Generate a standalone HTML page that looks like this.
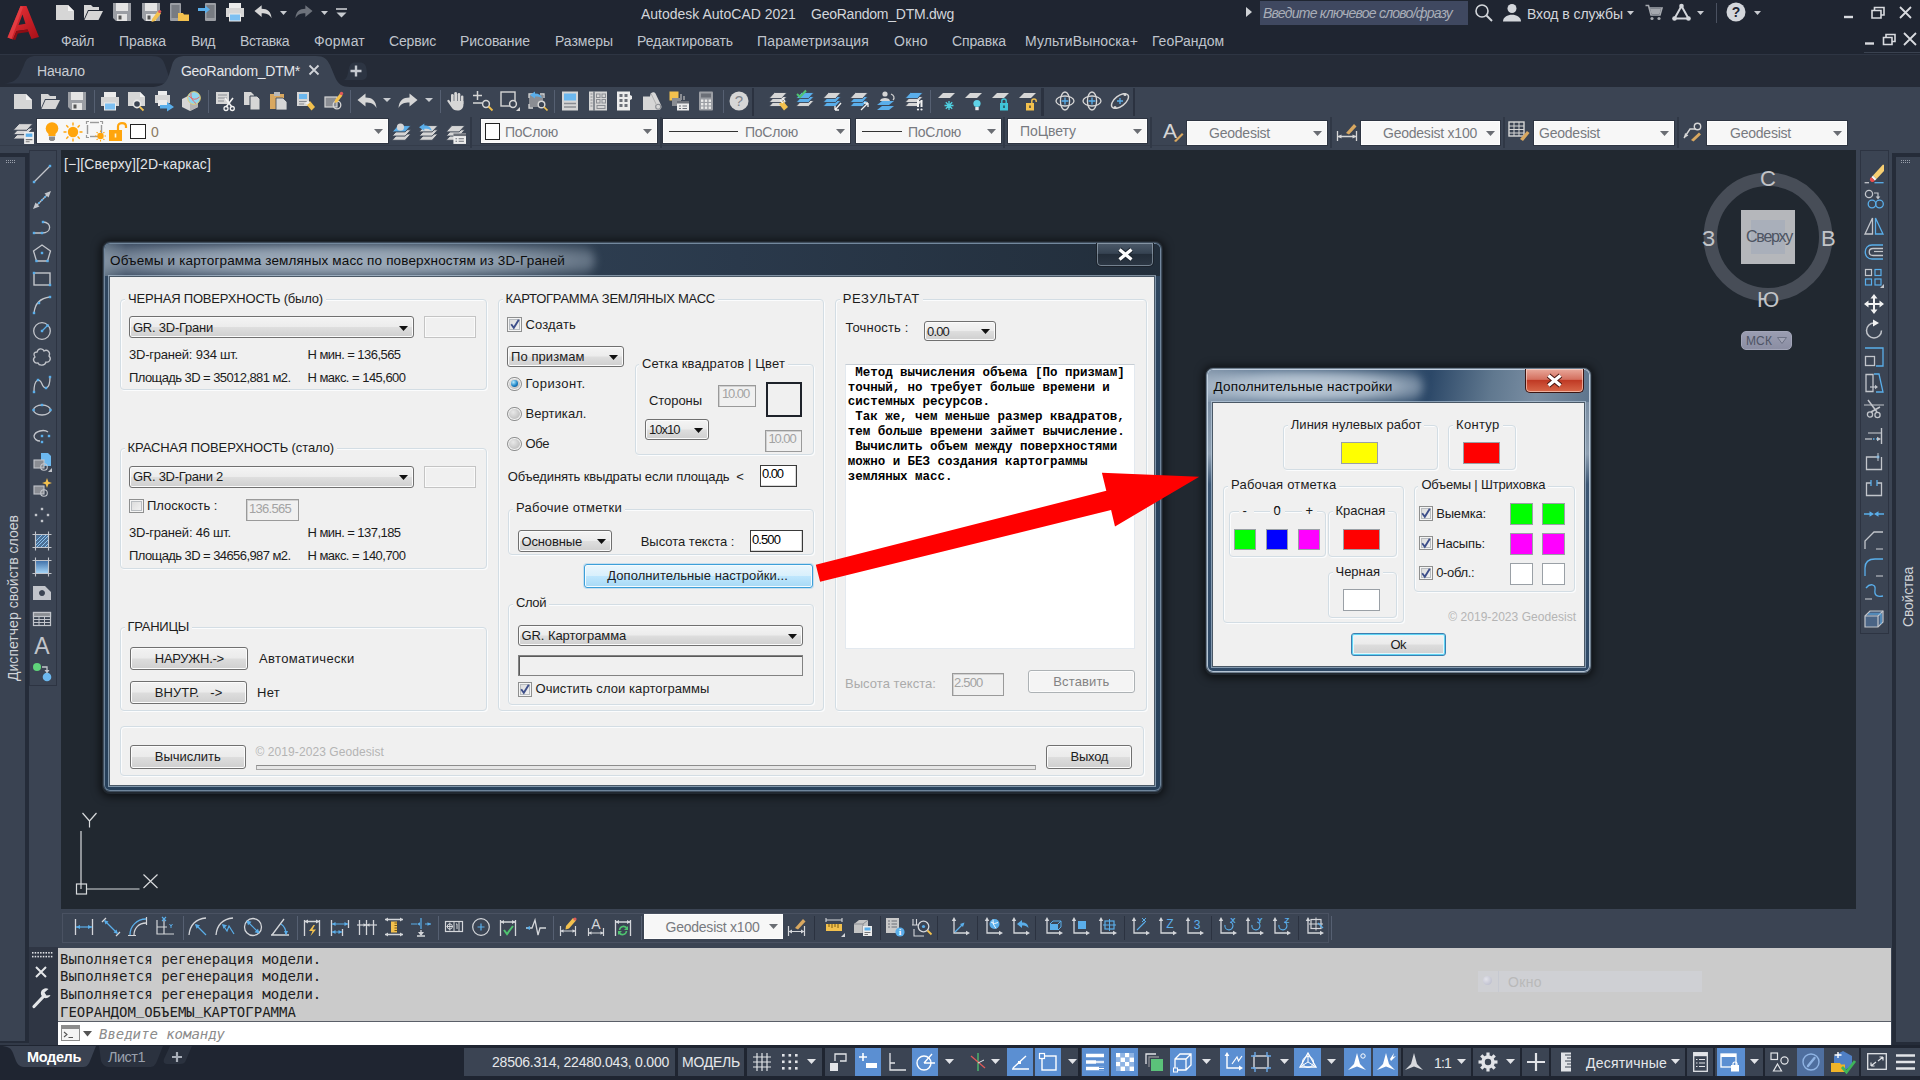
<!DOCTYPE html>
<html lang="ru"><head><meta charset="utf-8"><title>Autodesk AutoCAD 2021 GeoRandom_DTM.dwg</title>
<style>
html,body{margin:0;padding:0;}
body{width:1920px;height:1080px;overflow:hidden;position:relative;background:#212830;font-family:"Liberation Sans",sans-serif;font-size:14px;}
body div,body span.t,body svg{position:absolute;box-sizing:border-box;}
span.t{white-space:pre;display:block;}
svg{overflow:visible;}
</style></head><body>
<div style="left:0px;top:0px;width:1920px;height:1080px;background:#3b4453;"></div>
<div style="left:0px;top:0px;width:1920px;height:54px;background:#1f2531;"></div>
<div style="left:0px;top:54px;width:1920px;height:1px;background:#2e3543;"></div>
<div style="left:0px;top:55px;width:1920px;height:32px;background:#252b37;"></div>
<div style="left:0px;top:87px;width:1920px;height:62px;background:#3b4453;"></div>
<div style="left:0px;top:145px;width:1200px;height:1px;background:#343c4a;"></div>
<div style="left:61px;top:150px;width:1795px;height:759px;background:#212830;"></div>
<div style="left:0px;top:153px;width:29px;height:893px;background:#252c39;"></div>
<div style="left:0px;top:156.5px;width:25px;height:884px;background:#3a4352;"></div>
<div style="left:0px;top:1043.3px;width:29px;height:3px;background:#323a48;"></div>
<div style="left:29px;top:150px;width:28px;height:536px;background:#3b4453;border:1px solid #2d3442;"></div>
<div style="left:57px;top:150px;width:4px;height:760px;background:#3b4453;"></div>
<div style="left:1856px;top:150px;width:4px;height:760px;background:#3b4453;"></div>
<div style="left:1860px;top:150px;width:29px;height:484px;background:#3b4453;border:1px solid #2d3442;"></div>
<div style="left:1892px;top:153px;width:28px;height:893px;background:#252c39;"></div>
<div style="left:1895.5px;top:156.5px;width:25px;height:885px;background:#3a4352;"></div>
<div style="left:57px;top:909px;width:1835px;height:38px;background:#3b4453;"></div>
<div style="left:28.5px;top:947px;width:29px;height:98.5px;background:#2f3644;"></div>
<div style="left:58px;top:947.5px;width:1833px;height:75px;background:#cbcbcb;"></div>
<div style="left:58px;top:1021.3px;width:1833px;height:1px;background:#5a5f68;"></div>
<div style="left:58px;top:1022px;width:1833px;height:23px;background:#ffffff;"></div>
<div style="left:0px;top:1045px;width:1920px;height:35px;background:#1f2531;"></div>
<svg style="left:6px;top:4px;" width="36" height="38" viewBox="0 0 36 38"><defs><linearGradient id="ag" x1="0" y1="0" x2="1" y2="1"><stop offset="0" stop-color="#f0343a"/><stop offset="1" stop-color="#a50f17"/></linearGradient></defs>
<path d="M14.5 2 L20.5 2 L33 33 L25.5 35 L21.5 25.5 L10.5 27 L7 35.5 L1.5 33.5 Z M12.5 21 L19.5 19.8 L16.5 10.5 Z" fill="url(#ag)" fill-rule="evenodd"/>
<path d="M14.5 2 L17 3.2 L5.5 35 L1.5 33.5 Z" fill="#e8444a" opacity=".75"/>
<path d="M7 35.5 L10.5 27 L21.5 25.5 L22.5 28 L11.8 29.6 L9.3 36 Z" fill="#8e0c13"/></svg>
<span class="t" style="left:641px;top:7.15px;font-size:14px;line-height:14px;color:#d3d6db;">Autodesk AutoCAD 2021</span>
<span class="t" style="left:811px;top:7.15px;font-size:14px;line-height:14px;color:#d3d6db;letter-spacing:-0.239px;">GeoRandom_DTM.dwg</span>
<svg style="left:1245px;top:7px;" width="8" height="10" viewBox="0 0 8 10"><path d="M1 0 L7 5 L1 10 Z" fill="#cfd2d6"/></svg>
<div style="left:1260px;top:1px;width:208px;height:24px;background:#3f4860;"></div>
<span class="t" style="left:1263px;top:6.15px;font-size:14px;line-height:14px;color:#a9aeb8;font-family:'Liberation Sans',sans-serif;font-style:italic;letter-spacing:-0.753px;">Введите ключевое слово/фразу</span>
<span class="t" style="left:1527px;top:7.15px;font-size:14px;line-height:14px;color:#d3d6db;letter-spacing:-0.063px;">Вход в службы</span>
<span class="t" style="left:61px;top:34.15px;font-size:14px;line-height:14px;color:#bfc4cc;letter-spacing:-0.355px;">Файл</span>
<span class="t" style="left:119px;top:34.15px;font-size:14px;line-height:14px;color:#bfc4cc;letter-spacing:-0.049px;">Правка</span>
<span class="t" style="left:191px;top:34.15px;font-size:14px;line-height:14px;color:#bfc4cc;letter-spacing:-0.442px;">Вид</span>
<span class="t" style="left:240px;top:34.15px;font-size:14px;line-height:14px;color:#bfc4cc;letter-spacing:-0.434px;">Вставка</span>
<span class="t" style="left:314px;top:34.15px;font-size:14px;line-height:14px;color:#bfc4cc;letter-spacing:0.211px;">Формат</span>
<span class="t" style="left:389px;top:34.15px;font-size:14px;line-height:14px;color:#bfc4cc;letter-spacing:-0.157px;">Сервис</span>
<span class="t" style="left:460px;top:34.15px;font-size:14px;line-height:14px;color:#bfc4cc;letter-spacing:-0.056px;">Рисование</span>
<span class="t" style="left:555px;top:34.15px;font-size:14px;line-height:14px;color:#bfc4cc;letter-spacing:-0.026px;">Размеры</span>
<span class="t" style="left:637px;top:34.15px;font-size:14px;line-height:14px;color:#bfc4cc;letter-spacing:-0.054px;">Редактировать</span>
<span class="t" style="left:757px;top:34.15px;font-size:14px;line-height:14px;color:#bfc4cc;letter-spacing:0.142px;">Параметризация</span>
<span class="t" style="left:894px;top:34.15px;font-size:14px;line-height:14px;color:#bfc4cc;letter-spacing:0.367px;">Окно</span>
<span class="t" style="left:952px;top:34.15px;font-size:14px;line-height:14px;color:#bfc4cc;letter-spacing:-0.131px;">Справка</span>
<span class="t" style="left:1025px;top:34.15px;font-size:14px;line-height:14px;color:#bfc4cc;letter-spacing:0.112px;">МультиВыноска+</span>
<span class="t" style="left:1152px;top:34.15px;font-size:14px;line-height:14px;color:#bfc4cc;letter-spacing:-0.021px;">ГеоРандом</span>
<svg style="left:0px;top:55px;" width="420" height="32" viewBox="0 0 420 32"><path d="M0 28.5 C10 28.5 16 27 20 19 L24 10 C26 3 30 1 36 1 L152 1 C160 1 163 4 165 10 L168 19 C170 26 174 28.5 182 28.5 Z" fill="#2f3746"/>
<path d="M150 32 C160 32 166 30 169 20 L172 10 C174 3 178 1 186 1 L316 1 C324 1 327 4 330 10 L335 22 C338 29 342 32 350 32 Z" fill="#3b4453"/>
<path d="M343 25 C346 25 347 22 348 18 L349 13 C350 9 352 7.5 355 7.5 L360 7.5 C364 7.5 366 10 366.5 14 L367 19 C367 23 365 25 361 25 Z" fill="#2d3543"/></svg>
<span class="t" style="left:37px;top:64.15px;font-size:14px;line-height:14px;color:#c9cdd3;letter-spacing:-0.130px;">Начало</span>
<span class="t" style="left:181px;top:64.15px;font-size:14px;line-height:14px;color:#e4e6ea;letter-spacing:-0.281px;">GeoRandom_DTM*</span>
<svg style="left:308px;top:64px;" width="12" height="12" viewBox="0 0 12 12"><path d="M1.5 1.5 L10.5 10.5 M10.5 1.5 L1.5 10.5" stroke="#d0d3d8" stroke-width="1.8" fill="none"/></svg>
<svg style="left:350px;top:65px;" width="12" height="12" viewBox="0 0 12 12"><path d="M6 0.5 V11.5 M0.5 6 H11.5" stroke="#c4c8cf" stroke-width="2.4" fill="none"/></svg>
<svg style="left:1843px;top:6px;" width="70" height="14" viewBox="0 0 70 14"><path d="M1 11 H10" stroke="#d8dadf" stroke-width="2.4"/>
<path d="M29 4.5 H38 V12 H29 Z M31.5 4.5 V1.5 H41 V9 H38" stroke="#d8dadf" stroke-width="1.6" fill="none"/>
<path d="M57 1 L68 12 M68 1 L57 12" stroke="#d8dadf" stroke-width="1.8"/></svg>
<svg style="left:1864px;top:32px;" width="54" height="14" viewBox="0 0 54 14"><path d="M1 11.5 H10" stroke="#d8dadf" stroke-width="2.4"/>
<path d="M19.5 5.5 H28 V12.5 H19.5 Z M22 5.5 V2.5 H31 V9.5 H28" stroke="#d8dadf" stroke-width="1.6" fill="none"/>
<path d="M40 1 L52 13 M52 1 L40 13" stroke="#d8dadf" stroke-width="1.8"/></svg>
<div style="left:1864px;top:52px;width:56px;height:1px;background:#3a4250;"></div>
<svg style="left:54.5px;top:2px;" width="20" height="20" viewBox="0 0 20 20"><path d="M1 3 H13 L19 9 V18 H1 Z" fill="#d6d6d6"/><path d="M13 3 V9 H19 Z" fill="#f4f4f4"/></svg>
<svg style="left:82.5px;top:2px;" width="20" height="20" viewBox="0 0 20 20"><path d="M1 3 H8 L10 5 H16 V8 H5 L1 17 Z" fill="#d6d6d6"/><path d="M5.5 9 H20 L15.5 18 H1.5 Z" fill="#d6d6d6"/></svg>
<svg style="left:111.5px;top:2px;" width="20" height="20" viewBox="0 0 20 20"><path d="M1 1 H19 V19 H4 L1 16 Z" fill="#9b9ea4"/><rect x="4" y="1" width="12" height="8" fill="#e4e4e4"/><rect x="5" y="12" width="10" height="7" fill="#e4e4e4"/><rect x="6.5" y="13.5" width="3" height="4" fill="#555"/></svg>
<svg style="left:140.5px;top:2px;" width="20" height="20" viewBox="0 0 20 20"><path d="M1 1 H19 V19 H4 L1 16 Z" fill="#9b9ea4"/><rect x="4" y="1" width="12" height="8" fill="#e4e4e4"/><rect x="5" y="12" width="10" height="7" fill="#e4e4e4"/><rect x="6.5" y="13.5" width="3" height="4" fill="#555"/><path d="M11 17 L17 9 L20 11.5 L14 19 L10.5 20 Z" fill="#f3c14e"/><circle cx="18.7" cy="9.5" r="1.6" fill="#e05a5a"/></svg>
<svg style="left:168.5px;top:2px;" width="20" height="20" viewBox="0 0 20 20"><rect x="1" y="1" width="11" height="18" rx="1" fill="#9b9ea4"/><rect x="2.5" y="3" width="8" height="13" fill="#777b82"/><path d="M9 11 H14 L15 12.5 H20 V19 H9 Z" fill="#f3c14e"/></svg>
<svg style="left:197.5px;top:2px;" width="20" height="20" viewBox="0 0 20 20"><rect x="7" y="1" width="11" height="18" rx="1" fill="#9b9ea4"/><rect x="8.5" y="3" width="8" height="13" fill="#777b82"/><path d="M0 6 H7 V3.5 L12 7.5 L7 11.5 V9 H0 Z" fill="#5aaeea"/></svg>
<svg style="left:224.5px;top:2px;" width="20" height="20" viewBox="0 0 20 20"><rect x="4" y="1" width="12" height="6" fill="#ececec"/><path d="M1 6 H19 V15 H1 Z" fill="#d6d6d6"/><rect x="4.5" y="12" width="11" height="7" fill="#7dc0f2" stroke="#ececec" stroke-width="1"/></svg>
<svg style="left:254px;top:3px;" width="18" height="18" viewBox="0 0 20 20"><path d="M0.5 9 L8.5 2.5 V6.5 C15 6.5 19 9.5 19.5 17 C17 12.5 13.5 11.5 8.5 11.5 V15.5 Z" fill="#d6d6d6"/></svg>
<svg style="left:280px;top:11px;" width="7" height="4" viewBox="0 0 7 4"><path d="M0 0 H7 L3.5 4 Z" fill="#c8cbd0"/></svg>
<svg style="left:295px;top:3px;" width="18" height="18" viewBox="0 0 20 20"><path d="M19.5 9 L11.5 2.5 V6.5 C5 6.5 1 9.5 0.5 17 C3 12.5 6.5 11.5 11.5 11.5 V15.5 Z" fill="#6d727b"/></svg>
<svg style="left:321px;top:11px;" width="7" height="4" viewBox="0 0 7 4"><path d="M0 0 H7 L3.5 4 Z" fill="#c8cbd0"/></svg>
<svg style="left:336px;top:8px;" width="11" height="10" viewBox="0 0 11 10"><path d="M0 1 H11" stroke="#c8cbd0" stroke-width="1.6"/><path d="M0.5 4.5 H10.5 L5.5 9.5 Z" fill="#c8cbd0"/></svg>
<svg style="left:1474px;top:3px;" width="20" height="20" viewBox="0 0 20 20"><circle cx="8" cy="8" r="6" fill="none" stroke="#d3d6db" stroke-width="1.6"/><path d="M12.5 12.5 L18 18" stroke="#d3d6db" stroke-width="2"/></svg>
<svg style="left:1502px;top:3px;" width="20" height="20" viewBox="0 0 20 20"><circle cx="10" cy="5.5" r="4.5" fill="#d3d6db"/><path d="M1 18.5 C1 9.5 19 9.5 19 18.5 Z" fill="#d3d6db"/></svg>
<svg style="left:1627px;top:11px;" width="7" height="4" viewBox="0 0 7 4"><path d="M0 0 H7 L3.5 4 Z" fill="#c8cbd0"/></svg>
<svg style="left:1645px;top:4px;" width="18" height="17" viewBox="0 0 18 17"><path d="M0.5 1.5 H3.5 L6 11 H15 L17 4 H4.5" stroke="#a4a8ae" stroke-width="1.6" fill="none"/><path d="M5 5 H16 L14.5 10 H6.5 Z" fill="#a4a8ae"/><circle cx="7" cy="14.5" r="1.6" fill="#a4a8ae"/><circle cx="14" cy="14.5" r="1.6" fill="#a4a8ae"/></svg>
<svg style="left:1672px;top:3px;" width="19" height="18" viewBox="0 0 19 18"><path d="M9.5 3 L16.5 15.5 H2.5 Z" stroke="#d3d6db" stroke-width="2" fill="none"/><circle cx="9.5" cy="3" r="2.3" fill="#d3d6db"/><circle cx="2.5" cy="15.5" r="2.3" fill="#d3d6db"/><circle cx="16.5" cy="15.5" r="2.3" fill="#d3d6db"/></svg>
<svg style="left:1697px;top:11px;" width="7" height="4" viewBox="0 0 7 4"><path d="M0 0 H7 L3.5 4 Z" fill="#c8cbd0"/></svg>
<div style="left:1716px;top:3px;width:1px;height:20px;background:#4a5160;"></div>
<svg style="left:1726px;top:2px;" width="20" height="20" viewBox="0 0 20 20"><circle cx="10" cy="10" r="9.5" fill="#d3d6db"/><text x="10" y="15" text-anchor="middle" font-family="Liberation Sans,sans-serif" font-weight="bold" font-size="14" fill="#1f2531">?</text></svg>
<svg style="left:1754px;top:11px;" width="7" height="4" viewBox="0 0 7 4"><path d="M0 0 H7 L3.5 4 Z" fill="#c8cbd0"/></svg>
<svg style="left:13px;top:91px;" width="20" height="20" viewBox="0 0 20 20"><path d="M1 3 H13 L19 9 V18 H1 Z" fill="#d6d6d6"/><path d="M13 3 V9 H19 Z" fill="#f4f4f4"/></svg>
<svg style="left:40px;top:91px;" width="20" height="20" viewBox="0 0 20 20"><path d="M1 3 H8 L10 5 H16 V8 H5 L1 17 Z" fill="#d6d6d6"/><path d="M5.5 9 H20 L15.5 18 H1.5 Z" fill="#d6d6d6"/></svg>
<svg style="left:67px;top:91px;" width="20" height="20" viewBox="0 0 20 20"><path d="M1 1 H19 V19 H4 L1 16 Z" fill="#9b9ea4"/><rect x="4" y="1" width="12" height="8" fill="#e4e4e4"/><rect x="5" y="12" width="10" height="7" fill="#e4e4e4"/><rect x="6.5" y="13.5" width="3" height="4" fill="#555"/></svg>
<svg style="left:100px;top:91px;" width="20" height="20" viewBox="0 0 20 20"><rect x="4" y="1" width="12" height="6" fill="#ececec"/><path d="M1 6 H19 V15 H1 Z" fill="#d6d6d6"/><rect x="4.5" y="12" width="11" height="7" fill="#7dc0f2" stroke="#ececec" stroke-width="1"/></svg>
<svg style="left:127px;top:91px;" width="20" height="20" viewBox="0 0 20 20"><path d="M1 1 H13 L18 6 V15 H1 Z" fill="#d6d6d6"/><path d="M13 1 V6 H18 Z" fill="#f2f2f2"/><circle cx="10" cy="13" r="3.6" fill="#3b4453" stroke="#e8e8e8" stroke-width="1.6"/><path d="M12.8 15.8 L16.5 19.5" stroke="#f3c14e" stroke-width="1.8"/></svg>
<svg style="left:154px;top:91px;" width="20" height="20" viewBox="0 0 20 20"><rect x="4" y="0" width="9" height="5" fill="#ececec"/><path d="M1 4 H16 V12 H1 Z" fill="#d6d6d6"/><rect x="4" y="9" width="9" height="6" fill="#ececec"/><path d="M6 14 H13 V11 L20 16 L13 20.5 V17.5 H6 Z" fill="#5aaeea"/></svg>
<svg style="left:181px;top:91px;" width="20" height="20" viewBox="0 0 20 20"><path d="M1 8 L9 4 L17 8 V16 L9 20 L1 16 Z" fill="#d6d6d6"/><path d="M9 12 L17 8 V16 L9 20 Z" fill="#b4b4b4"/><circle cx="13" cy="7" r="6.3" fill="#8fd6f0" stroke="#e8d070" stroke-width="1"/><path d="M8 5 Q13 11 18.5 6 M10 2 Q9 8 15 12.5" stroke="#e86a6a" stroke-width="1" fill="none"/></svg>
<svg style="left:215px;top:91px;" width="20" height="20" viewBox="0 0 20 20"><path d="M1 1 H14 V13 H1 Z" fill="#d6d6d6"/><path d="M3 4 H12 M3 7 H12 M3 10 H9" stroke="#8a8d93" stroke-width="1.2"/><path d="M10 7 L17 16 M18 7 L11 16" stroke="#f2f2f2" stroke-width="1.6"/><circle cx="11" cy="17.5" r="2" fill="none" stroke="#f2f2f2" stroke-width="1.3"/><circle cx="17.3" cy="17.5" r="2" fill="none" stroke="#f2f2f2" stroke-width="1.3"/></svg>
<svg style="left:242px;top:91px;" width="20" height="20" viewBox="0 0 20 20"><path d="M2 1 H9 L12 4 V14 H2 Z" fill="#d6d6d6"/><path d="M8 5 H15 L18 8 V19 H8 Z" fill="#d6d6d6" stroke="#3b4453" stroke-width="1"/></svg>
<svg style="left:269px;top:91px;" width="20" height="20" viewBox="0 0 20 20"><path d="M1 3 H15 V18 H1 Z" fill="#d9a860"/><rect x="5" y="1" width="6" height="4" fill="#b9b9b9"/><path d="M7 7 H14 L18 11 V19 H7 Z" fill="#d6d6d6" stroke="#3b4453" stroke-width=".8"/></svg>
<svg style="left:296px;top:91px;" width="20" height="20" viewBox="0 0 20 20"><rect x="1" y="1" width="12" height="14" fill="#d6d6d6"/><rect x="3" y="3" width="8" height="5" fill="#6cb8ef"/><path d="M3 10.5 H11 M3 13 H8" stroke="#8a8d93" stroke-width="1.1"/><path d="M10 13 L14 10 L19 16 L15.5 19.5 Z" fill="#f3c14e"/><path d="M9 12 L12 9.5 L14 11.5 L11 14 Z" fill="#eee"/></svg>
<svg style="left:323px;top:91px;" width="20" height="20" viewBox="0 0 20 20"><rect x="2" y="6" width="12" height="10" fill="#8a8d93" stroke="#d6d6d6" stroke-width="1.2"/><circle cx="14" cy="14" r="3.8" fill="none" stroke="#d6d6d6" stroke-width="1.3"/><path d="M12 9 L17 2.5 L19.5 4.5 L14.5 11 L11.5 12 Z" fill="#f3c14e"/><circle cx="18.5" cy="2.5" r="1.7" fill="#e05a5a"/></svg>
<div style="left:94px;top:90px;width:1px;height:23px;background:#566072;"></div>
<div style="left:208px;top:90px;width:1px;height:23px;background:#566072;"></div>
<div style="left:350px;top:90px;width:1px;height:23px;background:#566072;"></div>
<div style="left:440px;top:90px;width:1px;height:23px;background:#566072;"></div>
<div style="left:554px;top:90px;width:1px;height:23px;background:#566072;"></div>
<div style="left:723px;top:90px;width:1px;height:23px;background:#566072;"></div>
<svg style="left:357px;top:91px;" width="20" height="20" viewBox="0 0 20 20"><path d="M0.5 9 L8.5 2.5 V6.5 C15 6.5 19 9.5 19.5 17 C17 12.5 13.5 11.5 8.5 11.5 V15.5 Z" fill="#d6d6d6"/></svg>
<svg style="left:383px;top:98px;" width="8" height="4" viewBox="0 0 8 4"><path d="M0 0 H8 L4.0 4 Z" fill="#c8cbd0"/></svg>
<svg style="left:398px;top:91px;" width="20" height="20" viewBox="0 0 20 20"><path d="M19.5 9 L11.5 2.5 V6.5 C5 6.5 1 9.5 0.5 17 C3 12.5 6.5 11.5 11.5 11.5 V15.5 Z" fill="#d6d6d6"/></svg>
<svg style="left:425px;top:98px;" width="8" height="4" viewBox="0 0 8 4"><path d="M0 0 H8 L4.0 4 Z" fill="#c8cbd0"/></svg>
<svg style="left:446px;top:91px;" width="20" height="20" viewBox="0 0 20 20"><g fill="#d6d6d6"><rect x="5" y="3" width="2.7" height="10" rx="1.3"/><rect x="8.3" y="1" width="2.7" height="11" rx="1.3"/><rect x="11.6" y="2" width="2.7" height="10" rx="1.3"/><rect x="14.9" y="4.5" width="2.5" height="9" rx="1.2"/><path d="M5 10 H17.4 V14 C17.4 17.5 15 19.5 11.5 19.5 C8.5 19.5 7 18.5 5 15.5 L1.5 10.5 C0.8 9.2 2.5 8.2 3.5 9.4 L5 11.5Z"/></g></svg>
<svg style="left:473px;top:91px;" width="20" height="20" viewBox="0 0 20 20"><path d="M0 4.5 H9 M4.5 0 V9 M0 12 H9" stroke="#d6d6d6" stroke-width="1.5"/><circle cx="13" cy="13" r="3.4" fill="none" stroke="#d6d6d6" stroke-width="1.5"/><path d="M15.5 15.5 L19.5 19.5" stroke="#f3c14e" stroke-width="1.8"/></svg>
<svg style="left:500px;top:91px;" width="20" height="20" viewBox="0 0 20 20"><rect x="1" y="1" width="14" height="14" fill="none" stroke="#d6d6d6" stroke-width="1.4"/><circle cx="13" cy="13" r="3.4" fill="#3b4453" stroke="#d6d6d6" stroke-width="1.5"/><path d="M20 16 V20 H16 Z" fill="#d6d6d6"/></svg>
<svg style="left:528px;top:91px;" width="20" height="20" viewBox="0 0 20 20"><rect x="1" y="4" width="14" height="12" fill="#8a8d93"/><path d="M1 7 V3 H5 M12 3 H16 V7 M1 13 V17 H5" stroke="#d6d6d6" stroke-width="1.3" fill="none"/><path d="M2 4 L7 0.5 V2.5 C11 2.5 13 4 14 7 C11.5 5.5 10 5.5 7 5.5 V7.5 Z" fill="#5aaeea"/><circle cx="13.5" cy="13.5" r="3.3" fill="#3b4453" stroke="#d6d6d6" stroke-width="1.4"/><path d="M16 16 L19.5 19.5" stroke="#f3c14e" stroke-width="1.7"/></svg>
<svg style="left:560px;top:91px;" width="20" height="20" viewBox="0 0 20 20"><rect x="2" y="0.5" width="16" height="19" fill="#d6d6d6"/><rect x="4" y="2.5" width="12" height="7" fill="#6cb8ef"/><path d="M4 12.5 H16 M4 16 H16" stroke="#8a8d93" stroke-width="1.3"/></svg>
<svg style="left:588px;top:91px;" width="20" height="20" viewBox="0 0 20 20"><rect x="1" y="0.5" width="18" height="19" fill="#d6d6d6"/><path d="M6 0.5 V19.5" stroke="#3b4453" stroke-width="1"/><path d="M2.5 3 H4.5 M2.5 6 H4.5 M2.5 9 H4.5 M2.5 12 H4.5 M2.5 15 H4.5" stroke="#8a8d93" stroke-width="1"/><rect x="8.5" y="3" width="3.5" height="3.5" fill="none" stroke="#8a8d93"/><rect x="14" y="3" width="3.5" height="3.5" fill="none" stroke="#8a8d93"/><rect x="8.5" y="8.5" width="3.5" height="3.5" fill="none" stroke="#8a8d93"/><rect x="14" y="8.5" width="3.5" height="3.5" fill="none" stroke="#8a8d93"/><rect x="9" y="14.5" width="8" height="3" fill="none" stroke="#8a8d93"/></svg>
<svg style="left:615px;top:91px;" width="20" height="20" viewBox="0 0 20 20"><path d="M2 0.5 H15 V4 L17 5 V8 L15 9 V19.5 H2 Z" fill="#ececec"/><g fill="#6b6f77"><rect x="4.5" y="3" width="3" height="3"/><rect x="9.5" y="3" width="3" height="3"/><rect x="4.5" y="8" width="3" height="3"/><rect x="9.5" y="8" width="3" height="3"/><rect x="4.5" y="13" width="3" height="3"/><rect x="9.5" y="13" width="3" height="3"/></g></svg>
<svg style="left:642px;top:91px;" width="20" height="20" viewBox="0 0 20 20"><path d="M1 19 V5.5 H8 C8 1 12 0 13.5 2.5 L19 14 C20.5 17.5 18 19.5 15.5 19 Z" fill="#d6d6d6"/><circle cx="16.2" cy="15.8" r="2.5" fill="#d6d6d6" stroke="#8a8d93" stroke-width="1.1"/><path d="M9 2.5 L14.5 14" stroke="#b0b0b0" stroke-width="1"/></svg>
<svg style="left:669px;top:91px;" width="20" height="20" viewBox="0 0 20 20"><rect x="0.5" y="0.5" width="9" height="9" fill="#f3c14e"/><rect x="3" y="7" width="9" height="8" fill="#8a8d93"/><path d="M11 3 h2 v6 h-2 z M14 5 h2 v4 h-2 z" fill="#8a8d93"/><rect x="8" y="10" width="12" height="9.5" fill="#ececec"/><rect x="8" y="10" width="12" height="2.5" fill="#6b6f77"/><path d="M10 15 H12 M13.5 15 H18 M10 17.5 H12 M13.5 17.5 H18" stroke="#6b6f77" stroke-width="1"/></svg>
<svg style="left:696px;top:91px;" width="20" height="20" viewBox="0 0 20 20"><rect x="3" y="0.5" width="14" height="19" rx="1" fill="#9b9ea4"/><rect x="5" y="2.5" width="10" height="4" fill="#6b6f77"/><g fill="#e8e8e8"><rect x="5" y="8.5" width="2.4" height="2.4"/><rect x="8.8" y="8.5" width="2.4" height="2.4"/><rect x="12.6" y="8.5" width="2.4" height="2.4"/><rect x="5" y="12" width="2.4" height="2.4"/><rect x="8.8" y="12" width="2.4" height="2.4"/><rect x="12.6" y="12" width="2.4" height="2.4"/><rect x="5" y="15.5" width="2.4" height="2.4"/><rect x="8.8" y="15.5" width="2.4" height="2.4"/><rect x="12.6" y="15.5" width="2.4" height="2.4"/></g></svg>
<svg style="left:729px;top:91px;" width="20" height="20" viewBox="0 0 20 20"><circle cx="10" cy="10" r="9.5" fill="#d6d6d6"/><text x="10" y="15" text-anchor="middle" font-family="Liberation Sans,sans-serif" font-size="15" fill="#7f838a">?</text></svg>
<div style="left:752px;top:88px;width:2px;height:28px;background:#2b3240;"></div>
<div style="left:1041px;top:88px;width:3px;height:28px;background:#2b3240;"></div>
<div style="left:1133px;top:88px;width:2px;height:28px;background:#2b3240;"></div>
<svg style="left:768px;top:91px;" width="20" height="20" viewBox="0 0 20 20"><path d="M6.5 9.5 H19 L13.5 15.5 H1 Z" fill="#d6d6d6" stroke="#3b4453" stroke-width=".9"/><path d="M6.5 5.5 H19 L13.5 11.5 H1 Z" fill="#d6d6d6" stroke="#3b4453" stroke-width=".9"/><path d="M6.5 1.5 H19 L13.5 7.5 H1 Z" fill="#d6d6d6" stroke="#3b4453" stroke-width=".9"/><path d="M11 13 L15 10 L20 16 L16 19.5 Z" fill="#f3c14e"/><path d="M14 7 L17 10 M12 9 L15 12" stroke="#f2f2f2" stroke-width="1.2"/></svg>
<svg style="left:795px;top:91px;" width="20" height="20" viewBox="0 0 20 20"><path d="M6.5 9.5 H19 L13.5 15.5 H1 Z" fill="#d6d6d6" stroke="#3b4453" stroke-width=".9"/><path d="M6.5 5.5 H19 L13.5 11.5 H1 Z" fill="#5aaeea" stroke="#3b4453" stroke-width=".9"/><path d="M6.5 1.5 H19 L13.5 7.5 H1 Z" fill="#5aaeea" stroke="#3b4453" stroke-width=".9"/><path d="M2 3 L5 6 L11 -0.5" stroke="#4fc470" stroke-width="2" fill="none"/></svg>
<svg style="left:822px;top:91px;" width="20" height="20" viewBox="0 0 20 20"><path d="M6.5 9.5 H19 L13.5 15.5 H1 Z" fill="#5aaeea" stroke="#3b4453" stroke-width=".9"/><path d="M6.5 5.5 H19 L13.5 11.5 H1 Z" fill="#5aaeea" stroke="#3b4453" stroke-width=".9"/><path d="M6.5 1.5 H19 L13.5 7.5 H1 Z" fill="#d6d6d6" stroke="#3b4453" stroke-width=".9"/><path d="M19 12 L13 19 M13 19 V15 M13 19 H17" stroke="#f2f2f2" stroke-width="1.3" fill="none"/></svg>
<svg style="left:849px;top:91px;" width="20" height="20" viewBox="0 0 20 20"><path d="M6.5 9.5 H19 L13.5 15.5 H1 Z" fill="#5aaeea" stroke="#3b4453" stroke-width=".9"/><path d="M6.5 5.5 H19 L13.5 11.5 H1 Z" fill="#5aaeea" stroke="#3b4453" stroke-width=".9"/><path d="M6.5 1.5 H19 L13.5 7.5 H1 Z" fill="#d6d6d6" stroke="#3b4453" stroke-width=".9"/><path d="M12 19 L19 12 M19 12 V16 M19 12 H15" stroke="#f2f2f2" stroke-width="1.3" fill="none"/></svg>
<svg style="left:876px;top:91px;" width="20" height="20" viewBox="0 0 20 20"><circle cx="9" cy="3" r="2.6" fill="#d6d6d6"/><path d="M4 10 C4 6 14 6 14 10 Z" fill="#d6d6d6"/><path d="M6 10 H18 L13 14 H1 Z" fill="#5aaeea"/><path d="M6 15 H18 L13 19 H1 Z" fill="#5aaeea"/><path d="M15 3 C18 4 19 7 17 9" stroke="#d6d6d6" stroke-width="1.2" fill="none"/></svg>
<svg style="left:904px;top:91px;" width="20" height="20" viewBox="0 0 20 20"><path d="M6.5 9.5 H19 L13.5 15.5 H1 Z" fill="#d6d6d6" stroke="#3b4453" stroke-width=".9"/><path d="M6.5 5.5 H19 L13.5 11.5 H1 Z" fill="#d6d6d6" stroke="#3b4453" stroke-width=".9"/><path d="M6.5 1.5 H19 L13.5 7.5 H1 Z" fill="#5aaeea" stroke="#3b4453" stroke-width=".9"/><path d="M14 9 V16 M17.5 9 V16" stroke="#f2f2f2" stroke-width="2"/><circle cx="14" cy="18.5" r="1.1" fill="#f2f2f2"/><circle cx="17.5" cy="18.5" r="1.1" fill="#f2f2f2"/></svg>
<div style="left:930px;top:90px;width:1px;height:23px;background:#566072;"></div>
<svg style="left:936px;top:91px;" width="20" height="20" viewBox="0 0 20 20"><path d="M7 2 H19 L14 7 H2 Z" fill="#d6d6d6"/><path d="M13 10 V19 M8.5 14.5 H17.5 M9.8 11.3 L16.2 17.7 M16.2 11.3 L9.8 17.7" stroke="#4fd0e0" stroke-width="1.3"/></svg>
<svg style="left:963px;top:91px;" width="20" height="20" viewBox="0 0 20 20"><path d="M7 2 H19 L14 7 H2 Z" fill="#d6d6d6"/><circle cx="14" cy="12.5" r="3.6" fill="#5fd2e6"/><rect x="12.3" y="16" width="3.4" height="3.2" fill="#e8e8e8"/></svg>
<svg style="left:990px;top:91px;" width="20" height="20" viewBox="0 0 20 20"><path d="M7 2 H19 L14 7 H2 Z" fill="#d6d6d6"/><rect x="10" y="12" width="8" height="7.5" fill="#40c4d8"/><path d="M11.8 12 V10 C11.8 7.4 16.2 7.4 16.2 10 V12" stroke="#40c4d8" stroke-width="1.4" fill="none"/><rect x="13.4" y="14.5" width="1.2" height="2.5" fill="#1f2531"/></svg>
<svg style="left:1017px;top:91px;" width="20" height="20" viewBox="0 0 20 20"><path d="M7 2 H19 L14 7 H2 Z" fill="#d6d6d6"/><rect x="9" y="12" width="8" height="7.5" fill="#f3c14e"/><path d="M14.8 12 V10 C14.8 7.4 19.2 7.4 19.2 10 V11" stroke="#f3c14e" stroke-width="1.4" fill="none"/><rect x="12.4" y="14.5" width="1.2" height="2.5" fill="#1f2531"/></svg>
<svg style="left:1055px;top:91px;" width="20" height="20" viewBox="0 0 20 20"><g transform="rotate(0 10 10)"><ellipse cx="10" cy="10" rx="9" ry="5" fill="none" stroke="#d6d6d6" stroke-width="1.3"/></g><ellipse cx="10" cy="10" rx="4.6" ry="9" fill="none" stroke="#d6d6d6" stroke-width="1.3"/><path d="M10 6.5 V13.5 M6.5 10 H13.5" stroke="#5aaeea" stroke-width="1.3"/></svg>
<svg style="left:1082px;top:91px;" width="20" height="20" viewBox="0 0 20 20"><g transform="rotate(0 10 10)"><ellipse cx="10" cy="10" rx="9" ry="5" fill="none" stroke="#d6d6d6" stroke-width="1.3"/></g><ellipse cx="10" cy="10" rx="4.6" ry="9" fill="none" stroke="#d6d6d6" stroke-width="1.3"/><path d="M10 6.5 V13.5 M6.5 10 H13.5" stroke="#5aaeea" stroke-width="1.3"/></svg>
<svg style="left:1110px;top:91px;" width="20" height="20" viewBox="0 0 20 20"><g transform="rotate(-38 10 10)"><ellipse cx="10" cy="10" rx="10" ry="5.2" fill="none" stroke="#d6d6d6" stroke-width="1.4"/></g><path d="M10 7 V13 M7 10 H13" stroke="#5aaeea" stroke-width="1.3"/><circle cx="15" cy="3.5" r="1.6" fill="#d6d6d6"/><circle cx="5" cy="16.5" r="1.6" fill="#d6d6d6"/></svg>
<svg style="left:12px;top:122px;" width="22" height="22" viewBox="0 0 20 20"><path d="M6.5 9.5 H19 L13.5 15.5 H1 Z" fill="#d6d6d6" stroke="#3b4453" stroke-width=".9"/><path d="M6.5 5.5 H19 L13.5 11.5 H1 Z" fill="#d6d6d6" stroke="#3b4453" stroke-width=".9"/><path d="M6.5 1.5 H19 L13.5 7.5 H1 Z" fill="#d6d6d6" stroke="#3b4453" stroke-width=".9"/><rect x="11" y="9" width="9" height="11" fill="#ececec"/><rect x="12.5" y="10.5" width="6" height="3" fill="#5aaeea"/><path d="M12.5 16 H18.5 M12.5 18 H16" stroke="#777" stroke-width="1"/></svg>
<div style="left:37px;top:119px;width:351px;height:24px;background:#f7f7f7;border:1px solid #fdfdfd;box-shadow:0 0 0 1px #2e3542;"></div>
<svg style="left:374px;top:129px;" width="9" height="5" viewBox="0 0 9 5"><path d="M0 0 H9 L4.5 5 Z" fill="#6a6d73"/></svg>
<svg style="left:44px;top:121px;" width="16" height="21" viewBox="0 0 16 21"><circle cx="8" cy="7.5" r="6.3" fill="#ffa50d"/><path d="M4.5 12 H11.5 V15 H4.5 Z" fill="#ffa50d"/><path d="M5 15.5 H11 V18.5 L9.5 20 H6.5 L5 18.5 Z" fill="#8c8c8c"/></svg>
<svg style="left:63px;top:122px;" width="20" height="20" viewBox="0 0 20 20"><circle cx="10" cy="10" r="5.2" fill="#ffa50d"/><path d="M10 0.5 V3.5 M10 16.5 V19.5 M0.5 10 H3.5 M16.5 10 H19.5 M3.3 3.3 L5.4 5.4 M14.6 14.6 L16.7 16.7 M16.7 3.3 L14.6 5.4 M5.4 14.6 L3.3 16.7" stroke="#ffa50d" stroke-width="1.4"/></svg>
<svg style="left:86px;top:121px;" width="22" height="22" viewBox="0 0 22 22"><rect x="1.5" y="1.5" width="14" height="14" fill="none" stroke="#9a9a9a" stroke-width="1.4"/><path d="M0 0 h4 v4 h-4z M13 0 h4 v4 h-4z M0 13 h4 v4 h-4z" fill="#f7f7f7"/><path d="M0.5 3 V0.5 H3 M14 0.5 H16.5 V3 M0.5 14 V16.5 H3" stroke="#9a9a9a" stroke-width="1.2" fill="none"/><circle cx="14.5" cy="15" r="3.2" fill="#ffa50d"/><path d="M14.5 9.5 V11 M14.5 19 V20.5 M9 15 H10.5 M18.5 15 H20 M10.6 11.1 L11.7 12.2 M17.3 17.8 L18.4 18.9 M18.4 11.1 L17.3 12.2 M11.7 17.8 L10.6 18.9" stroke="#ffa50d" stroke-width="1.1"/></svg>
<svg style="left:108px;top:121px;" width="20" height="21" viewBox="0 0 20 21"><rect x="1" y="9" width="13" height="11" fill="#ffa50d"/><path d="M10 9 V5.5 C10 1 18 1 18 5.5 V7" stroke="#ffa50d" stroke-width="2.2" fill="none"/><rect x="6.7" y="12.5" width="1.6" height="4" fill="#fff3d6"/></svg>
<div style="left:130px;top:124px;width:16px;height:15px;background:#ffffff;border:1.5px solid #222;"></div>
<span class="t" style="left:151px;top:124.65px;font-size:14px;line-height:14px;color:#8a7a62;">0</span>
<svg style="left:391px;top:124px;" width="21" height="21" viewBox="0 0 20 20"><path d="M6.5 9.5 H19 L13.5 15.5 H1 Z" fill="#d6d6d6" stroke="#3b4453" stroke-width=".9"/><path d="M6.5 5.5 H19 L13.5 11.5 H1 Z" fill="#d6d6d6" stroke="#3b4453" stroke-width=".9"/><path d="M6.5 1.5 H19 L13.5 7.5 H1 Z" fill="#5aaeea" stroke="#3b4453" stroke-width=".9"/><circle cx="9" cy="3" r="3.4" fill="#d6d6d6"/></svg>
<svg style="left:418px;top:124px;" width="21" height="21" viewBox="0 0 20 20"><path d="M6.5 9.5 H19 L13.5 15.5 H1 Z" fill="#d6d6d6" stroke="#3b4453" stroke-width=".9"/><path d="M6.5 5.5 H19 L13.5 11.5 H1 Z" fill="#d6d6d6" stroke="#3b4453" stroke-width=".9"/><path d="M6.5 1.5 H19 L13.5 7.5 H1 Z" fill="#d6d6d6" stroke="#3b4453" stroke-width=".9"/><path d="M1 3 L6 -0.5 V1.5 C10 1.5 12.5 3 13 6.5 C11 4.5 9 4.5 6 4.5 V6.5 Z" fill="#5aaeea"/></svg>
<svg style="left:445px;top:124px;" width="21" height="21" viewBox="0 0 20 20"><path d="M6.5 9.5 H19 L13.5 15.5 H1 Z" fill="#d6d6d6" stroke="#3b4453" stroke-width=".9"/><path d="M6.5 5.5 H19 L13.5 11.5 H1 Z" fill="#d6d6d6" stroke="#3b4453" stroke-width=".9"/><path d="M6.5 1.5 H19 L13.5 7.5 H1 Z" fill="#d6d6d6" stroke="#3b4453" stroke-width=".9"/><rect x="8" y="9" width="12" height="10" fill="#ececec"/><rect x="8" y="9" width="12" height="2.5" fill="#6b6f77"/><path d="M10 14 H11.5 M13 14 H18 M10 16.5 H11.5 M13 16.5 H18" stroke="#6b6f77" stroke-width="1"/></svg>
<div style="left:470px;top:117px;width:2px;height:31px;background:#303846;"></div>
<div style="left:481px;top:119px;width:176px;height:24px;background:#f7f7f7;border:1px solid #fdfdfd;box-shadow:0 0 0 1px #2e3542;"></div>
<svg style="left:643px;top:129px;" width="9" height="5" viewBox="0 0 9 5"><path d="M0 0 H9 L4.5 5 Z" fill="#6a6d73"/></svg>
<div style="left:485px;top:123px;width:15px;height:17px;background:#ffffff;border:1.5px solid #222;"></div>
<span class="t" style="left:505px;top:124.65px;font-size:14px;line-height:14px;color:#777a80;letter-spacing:-0.262px;">ПоСлою</span>
<div style="left:660px;top:117px;width:2px;height:31px;background:#303846;"></div>
<div style="left:663px;top:119px;width:187px;height:24px;background:#f7f7f7;border:1px solid #fdfdfd;box-shadow:0 0 0 1px #2e3542;"></div>
<svg style="left:836px;top:129px;" width="9" height="5" viewBox="0 0 9 5"><path d="M0 0 H9 L4.5 5 Z" fill="#6a6d73"/></svg>
<div style="left:669px;top:131px;width:69px;height:1px;background:#333;"></div>
<span class="t" style="left:745px;top:124.65px;font-size:14px;line-height:14px;color:#777a80;letter-spacing:-0.262px;">ПоСлою</span>
<div style="left:856px;top:119px;width:145px;height:24px;background:#f7f7f7;border:1px solid #fdfdfd;box-shadow:0 0 0 1px #2e3542;"></div>
<svg style="left:987px;top:129px;" width="9" height="5" viewBox="0 0 9 5"><path d="M0 0 H9 L4.5 5 Z" fill="#6a6d73"/></svg>
<div style="left:862px;top:131px;width:40px;height:1px;background:#333;"></div>
<span class="t" style="left:908px;top:124.65px;font-size:14px;line-height:14px;color:#777a80;letter-spacing:-0.262px;">ПоСлою</span>
<div style="left:1003px;top:117px;width:2px;height:31px;background:#303846;"></div>
<div style="left:1008px;top:119px;width:139px;height:24px;background:#f7f7f7;border:1px solid #fdfdfd;box-shadow:0 0 0 1px #2e3542;"></div>
<svg style="left:1133px;top:129px;" width="9" height="5" viewBox="0 0 9 5"><path d="M0 0 H9 L4.5 5 Z" fill="#6a6d73"/></svg>
<span class="t" style="left:1020px;top:123.65px;font-size:14px;line-height:14px;color:#777a80;letter-spacing:-0.054px;">ПоЦвету</span>
<div style="left:1150px;top:117px;width:2px;height:31px;background:#303846;"></div>
<svg style="left:1163px;top:121px;" width="22" height="22" viewBox="0 0 22 22"><text x="0" y="17" font-family="Liberation Sans,sans-serif" font-size="21" fill="#d6d6d6">A</text><path d="M11 20 L19 12 L20.5 13.5 L13 21 Z" fill="#d9a860"/></svg>
<div style="left:1187px;top:121px;width:140px;height:24px;background:#f7f7f7;border:1px solid #fdfdfd;box-shadow:0 0 0 1px #2e3542;"></div>
<svg style="left:1313px;top:131px;" width="9" height="5" viewBox="0 0 9 5"><path d="M0 0 H9 L4.5 5 Z" fill="#6a6d73"/></svg>
<span class="t" style="left:1209px;top:126.15px;font-size:14px;line-height:14px;color:#777a80;letter-spacing:-0.226px;">Geodesist</span>
<div style="left:1330px;top:117px;width:2px;height:31px;background:#303846;"></div>
<svg style="left:1336px;top:121px;" width="24" height="22" viewBox="0 0 24 22"><path d="M1.5 10 V20 M20.5 10 V20 M1.5 15.5 H20.5" stroke="#d6d6d6" stroke-width="1.3" fill="none"/><path d="M1.5 15.5 l4 -2 v4z M20.5 15.5 l-4 -2 v4z" fill="#d6d6d6"/><path d="M10 12 L18 3 L20.5 5.5 L13 13.5 Z" fill="#d9a860"/></svg>
<div style="left:1361px;top:121px;width:139px;height:24px;background:#f7f7f7;border:1px solid #fdfdfd;box-shadow:0 0 0 1px #2e3542;"></div>
<svg style="left:1486px;top:131px;" width="9" height="5" viewBox="0 0 9 5"><path d="M0 0 H9 L4.5 5 Z" fill="#6a6d73"/></svg>
<span class="t" style="left:1383px;top:126.15px;font-size:14px;line-height:14px;color:#777a80;letter-spacing:-0.234px;">Geodesist x100</span>
<div style="left:1503px;top:117px;width:2px;height:31px;background:#303846;"></div>
<svg style="left:1508px;top:121px;" width="23" height="22" viewBox="0 0 23 22"><rect x="1" y="1" width="15" height="14" fill="none" stroke="#d6d6d6" stroke-width="1.4"/><path d="M1 5 H16 M1 8.5 H16 M1 12 H16 M6 1 V15 M11 1 V15" stroke="#d6d6d6" stroke-width="1"/><path d="M12 18 L19 10 L21.5 12 L15 20 Z" fill="#d9a860"/></svg>
<div style="left:1534px;top:121px;width:140px;height:24px;background:#f7f7f7;border:1px solid #fdfdfd;box-shadow:0 0 0 1px #2e3542;"></div>
<svg style="left:1660px;top:131px;" width="9" height="5" viewBox="0 0 9 5"><path d="M0 0 H9 L4.5 5 Z" fill="#6a6d73"/></svg>
<span class="t" style="left:1539px;top:126.15px;font-size:14px;line-height:14px;color:#777a80;letter-spacing:-0.226px;">Geodesist</span>
<div style="left:1677px;top:117px;width:2px;height:31px;background:#303846;"></div>
<svg style="left:1682px;top:121px;" width="22" height="22" viewBox="0 0 22 22"><path d="M2 17 L8 8 H14" stroke="#d6d6d6" stroke-width="1.4" fill="none"/><path d="M2 17 l1 -5 l3.4 2.4z" fill="#d6d6d6"/><circle cx="15.5" cy="5.5" r="3.2" fill="none" stroke="#d6d6d6" stroke-width="1.4"/><path d="M9 19 L17 11.5 L19 13.5 L11.5 20.5 Z" fill="#d9a860"/></svg>
<div style="left:1707px;top:121px;width:140px;height:24px;background:#f7f7f7;border:1px solid #fdfdfd;box-shadow:0 0 0 1px #2e3542;"></div>
<svg style="left:1833px;top:131px;" width="9" height="5" viewBox="0 0 9 5"><path d="M0 0 H9 L4.5 5 Z" fill="#6a6d73"/></svg>
<span class="t" style="left:1730px;top:126.15px;font-size:14px;line-height:14px;color:#777a80;letter-spacing:-0.226px;">Geodesist</span>
<svg style="left:32px;top:164px;" width="20" height="20" viewBox="0 0 20 20"><path d="M2 18 L18 2" stroke="#c2c5cb" stroke-width="1.3"/><rect x="0.8" y="16.8" width="2.4" height="2.4" fill="#5aaeea"/><rect x="16.8" y="0.8" width="2.4" height="2.4" fill="#5aaeea"/></svg>
<svg style="left:32px;top:190px;" width="20" height="20" viewBox="0 0 20 20"><path d="M3 17 L17 3" stroke="#c2c5cb" stroke-width="1.3"/><path d="M19 1 L12.5 3.5 L16.5 7.5 Z M1 19 L7.5 16.5 L3.5 12.5 Z" fill="#c2c5cb"/><rect x="6.1" y="12.1" width="1.8" height="1.8" fill="#5aaeea"/><rect x="9.1" y="9.1" width="1.8" height="1.8" fill="#5aaeea"/><rect x="12.1" y="6.1" width="1.8" height="1.8" fill="#5aaeea"/></svg>
<svg style="left:32px;top:216px;" width="20" height="20" viewBox="0 0 20 20"><path d="M2 17 H10 C20 17 20 6 11 6" stroke="#c2c5cb" stroke-width="1.3" fill="none"/><rect x="0.8" y="15.8" width="2.4" height="2.4" fill="#5aaeea"/><rect x="8.8" y="15.8" width="2.4" height="2.4" fill="#5aaeea"/><rect x="9.8" y="4.8" width="2.4" height="2.4" fill="#5aaeea"/></svg>
<svg style="left:32px;top:243px;" width="20" height="20" viewBox="0 0 20 20"><path d="M10 2 L18.5 8 L15.5 18 H4.5 L1.5 8 Z" stroke="#c2c5cb" stroke-width="1.3" fill="none"/><rect x="8.8" y="8.8" width="2.4" height="2.4" fill="#5aaeea"/><rect x="14.3" y="16.8" width="2.4" height="2.4" fill="#5aaeea"/><rect x="3.3" y="16.8" width="2.4" height="2.4" fill="#5aaeea"/></svg>
<svg style="left:32px;top:269px;" width="20" height="20" viewBox="0 0 20 20"><rect x="2" y="4" width="16" height="12" stroke="#c2c5cb" stroke-width="1.4" fill="none"/><rect x="0.8" y="2.8" width="2.4" height="2.4" fill="#5aaeea"/><rect x="16.8" y="14.8" width="2.4" height="2.4" fill="#5aaeea"/></svg>
<svg style="left:32px;top:295px;" width="20" height="20" viewBox="0 0 20 20"><path d="M2 18 C3 8 9 3 18 2" stroke="#c2c5cb" stroke-width="1.3" fill="none"/><rect x="0.8" y="16.8" width="2.4" height="2.4" fill="#5aaeea"/><rect x="16.8" y="0.8" width="2.4" height="2.4" fill="#5aaeea"/><rect x="5.8" y="6.8" width="2.4" height="2.4" fill="#5aaeea"/></svg>
<svg style="left:32px;top:321px;" width="20" height="20" viewBox="0 0 20 20"><circle cx="10" cy="10" r="8.3" stroke="#c2c5cb" stroke-width="1.3" fill="none"/><path d="M10 10 L15.5 4.5" stroke="#5aaeea" stroke-width="1.2"/><rect x="8.8" y="8.8" width="2.4" height="2.4" fill="#5aaeea"/><rect x="14.3" y="3.3" width="2.4" height="2.4" fill="#5aaeea"/></svg>
<svg style="left:32px;top:347px;" width="20" height="20" viewBox="0 0 20 20"><path d="M5 5 C6 1 11 1 12 4 C15 2 19 5 17 9 C20 12 17 16 14 15 C13 19 7 19 6 16 C2 17 0 12 3 10 C1 7 2 5 5 5 Z" stroke="#c2c5cb" stroke-width="1.3" fill="none"/></svg>
<svg style="left:32px;top:374px;" width="20" height="20" viewBox="0 0 20 20"><path d="M2 18 C2 4 8 4 10 10 C12 16 18 16 18 3" stroke="#c2c5cb" stroke-width="1.3" fill="none"/><rect x="0.8" y="16.8" width="2.4" height="2.4" fill="#5aaeea"/><rect x="4.8" y="4.8" width="2.4" height="2.4" fill="#5aaeea"/><rect x="12.8" y="12.8" width="2.4" height="2.4" fill="#5aaeea"/><rect x="16.8" y="1.8" width="2.4" height="2.4" fill="#5aaeea"/></svg>
<svg style="left:32px;top:400px;" width="20" height="20" viewBox="0 0 20 20"><ellipse cx="10" cy="10" rx="8.5" ry="5" stroke="#c2c5cb" stroke-width="1.3" fill="none"/><rect x="0.30000000000000004" y="8.8" width="2.4" height="2.4" fill="#5aaeea"/><rect x="17.3" y="8.8" width="2.4" height="2.4" fill="#5aaeea"/><rect x="8.8" y="3.8" width="2.4" height="2.4" fill="#5aaeea"/></svg>
<svg style="left:32px;top:426px;" width="20" height="20" viewBox="0 0 20 20"><path d="M16 6 C12 3 3 5 2 10 C2 13 5 15 8 15" stroke="#c2c5cb" stroke-width="1.3" fill="none"/><rect x="8.8" y="8.8" width="2.4" height="2.4" fill="#5aaeea"/><rect x="15.8" y="8.8" width="2.4" height="2.4" fill="#5aaeea"/><rect x="8.8" y="14.8" width="2.4" height="2.4" fill="#5aaeea"/></svg>
<svg style="left:32px;top:452px;" width="20" height="20" viewBox="0 0 20 20"><path d="M9 1 H16 L19 4 V14 H9 Z" fill="#6cb8ef"/><rect x="2" y="8" width="10" height="8" fill="#8a8d93" stroke="#c2c5cb" stroke-width="1.1"/><circle cx="12" cy="15" r="3.3" fill="none" stroke="#c2c5cb" stroke-width="1.1"/><path d="M20 16 V20 H16 Z" fill="#c2c5cb"/></svg>
<svg style="left:32px;top:478px;" width="20" height="20" viewBox="0 0 20 20"><rect x="2" y="8" width="10" height="8" fill="#8a8d93" stroke="#c2c5cb" stroke-width="1.1"/><circle cx="12" cy="15" r="3.3" fill="none" stroke="#c2c5cb" stroke-width="1.1"/><path d="M15 0 L16.3 3.7 L20 5 L16.3 6.3 L15 10 L13.7 6.3 L10 5 L13.7 3.7 Z" fill="#f3c14e"/></svg>
<svg style="left:32px;top:505px;" width="20" height="20" viewBox="0 0 20 20"><rect x="8.8" y="2.8" width="2.4" height="2.4" fill="#c2c5cb"/><rect x="2.8" y="8.8" width="2.4" height="2.4" fill="#c2c5cb"/><rect x="14.8" y="8.8" width="2.4" height="2.4" fill="#c2c5cb"/><rect x="8.8" y="14.8" width="2.4" height="2.4" fill="#c2c5cb"/></svg>
<svg style="left:32px;top:531px;" width="20" height="20" viewBox="0 0 20 20"><rect x="3.5" y="3.5" width="13" height="13" fill="#4b6f95"/><path d="M4 10 L10 4 M4 14 L14 4 M4 17 L16 5 M8 17 L16 9 M12 17 L16 13" stroke="#8cc4f0" stroke-width="1"/><path d="M3.5 0.5 V19.5 M16.5 0.5 V19.5 M0.5 3.5 H19.5 M0.5 16.5 H19.5" stroke="#c2c5cb" stroke-width="1.1"/></svg>
<svg style="left:32px;top:557px;" width="20" height="20" viewBox="0 0 20 20"><defs><linearGradient id="gr1" x1="0" y1="0" x2="0" y2="1"><stop offset="0" stop-color="#3f6fa8"/><stop offset="1" stop-color="#a8d8fa"/></linearGradient></defs><rect x="3.5" y="3.5" width="13" height="13" fill="url(#gr1)"/><path d="M3.5 0.5 V19.5 M16.5 0.5 V19.5 M0.5 3.5 H19.5 M0.5 16.5 H19.5" stroke="#c2c5cb" stroke-width="1.1"/></svg>
<svg style="left:32px;top:583px;" width="20" height="20" viewBox="0 0 20 20"><path d="M1 3 H13 L19 9 V17 H1 Z M10 7 A3 3 0 1 0 10.01 7 Z" fill="#c2c5cb" fill-rule="evenodd"/></svg>
<svg style="left:32px;top:609px;" width="20" height="20" viewBox="0 0 20 20"><rect x="1.5" y="3.5" width="17" height="13" fill="none" stroke="#c2c5cb" stroke-width="1.2"/><path d="M1.5 7.5 H18.5 M1.5 10.5 H18.5 M1.5 13.5 H18.5 M7 7.5 V16.5 M12.5 7.5 V16.5" stroke="#c2c5cb" stroke-width="1"/><rect x="1.5" y="3.5" width="17" height="4" fill="#8a8d93" stroke="#c2c5cb" stroke-width="1.2"/></svg>
<svg style="left:32px;top:636px;" width="20" height="20" viewBox="0 0 20 20"><text x="10" y="18" text-anchor="middle" font-family="Liberation Sans,sans-serif" font-size="23" fill="#c2c5cb">A</text></svg>
<svg style="left:32px;top:662px;" width="20" height="20" viewBox="0 0 20 20"><circle cx="5" cy="5" r="4" fill="#5fd47a"/><circle cx="15" cy="15" r="4.3" fill="#6cb8ef"/><path d="M10 5 H15 V9" stroke="#c2c5cb" stroke-width="1.3" fill="none"/><path d="M15 11.5 L12.5 8 H17.5 Z" fill="#c2c5cb"/></svg>
<svg style="left:6px;top:160px;" width="11" height="4" viewBox="0 0 11 4"><rect x="0" y="0" width="1" height="1" fill="#9aa0ab"/><rect x="0" y="2" width="1" height="1" fill="#9aa0ab"/><rect x="2" y="0" width="1" height="1" fill="#9aa0ab"/><rect x="2" y="2" width="1" height="1" fill="#9aa0ab"/><rect x="4" y="0" width="1" height="1" fill="#9aa0ab"/><rect x="4" y="2" width="1" height="1" fill="#9aa0ab"/><rect x="6" y="0" width="1" height="1" fill="#9aa0ab"/><rect x="6" y="2" width="1" height="1" fill="#9aa0ab"/><rect x="8" y="0" width="1" height="1" fill="#9aa0ab"/><rect x="8" y="2" width="1" height="1" fill="#9aa0ab"/></svg>
<svg style="left:1901px;top:160px;" width="11" height="4" viewBox="0 0 11 4"><rect x="0" y="0" width="1" height="1" fill="#9aa0ab"/><rect x="0" y="2" width="1" height="1" fill="#9aa0ab"/><rect x="2" y="0" width="1" height="1" fill="#9aa0ab"/><rect x="2" y="2" width="1" height="1" fill="#9aa0ab"/><rect x="4" y="0" width="1" height="1" fill="#9aa0ab"/><rect x="4" y="2" width="1" height="1" fill="#9aa0ab"/><rect x="6" y="0" width="1" height="1" fill="#9aa0ab"/><rect x="6" y="2" width="1" height="1" fill="#9aa0ab"/><rect x="8" y="0" width="1" height="1" fill="#9aa0ab"/><rect x="8" y="2" width="1" height="1" fill="#9aa0ab"/></svg>
<span class="t" style="left:0px;top:-11.85px;font-size:14px;line-height:14px;color:#d0d3d8;letter-spacing:0.029px;transform-origin:0 0;transform:translate(6px,681px) rotate(-90deg);line-height:14px;top:0;left:0;">Диспетчер свойств слоев</span>
<span class="t" style="left:0px;top:-11.85px;font-size:14px;line-height:14px;color:#d0d3d8;letter-spacing:-0.184px;transform-origin:0 0;transform:translate(1901px,627px) rotate(-90deg);line-height:14px;top:0;left:0;">Свойства</span>
<svg style="left:1864px;top:163px;" width="20" height="20" viewBox="0 0 20 20"><path d="M9 12.5 L19 1.5 L20 2 V8 L12.5 16 Z" fill="#f7cf72"/><path d="M7.3 14.2 L9 12.5 L12.5 16 L10.8 17.7 Z" fill="#f4f4f4"/><path d="M7.3 14.2 L10.8 17.7 L9.5 18.8 C7.5 19.8 5 17.5 6.2 15.3 Z" fill="#ee4b4b"/><path d="M10.5 19.7 H19.6" stroke="#5aaeea" stroke-width="1.3"/><path d="M0.6 19.7 H5" stroke="#c2c5cb" stroke-width="1.3"/></svg>
<svg style="left:1864px;top:189px;" width="20" height="20" viewBox="0 0 20 20"><circle cx="5" cy="5" r="3.6" fill="none" stroke="#c2c5cb" stroke-width="1.3"/><path d="M10 4 H14 V8" stroke="#c2c5cb" stroke-width="1.2" fill="none"/><path d="M14 10.5 L11.7 7.5 H16.3 Z" fill="#c2c5cb"/><circle cx="8" cy="15" r="3.8" fill="none" stroke="#5aaeea" stroke-width="1.3"/><circle cx="15.5" cy="15" r="3.8" fill="none" stroke="#5aaeea" stroke-width="1.3"/></svg>
<svg style="left:1864px;top:216px;" width="20" height="20" viewBox="0 0 20 20"><path d="M8.5 2 V18 H1 Z" fill="none" stroke="#c2c5cb" stroke-width="1.3"/><path d="M11.5 2 V18 H19 Z" fill="none" stroke="#5aaeea" stroke-width="1.3"/></svg>
<svg style="left:1864px;top:242px;" width="20" height="20" viewBox="0 0 20 20"><path d="M19 3 H8 C-1 3 -1 17 8 17 H19" fill="none" stroke="#5aaeea" stroke-width="1.3"/><path d="M19 6.5 H9 C4 6.5 4 13.5 9 13.5 H19" fill="none" stroke="#c2c5cb" stroke-width="1.3"/><path d="M19 9.5 H10" stroke="#c2c5cb" stroke-width="1.2"/></svg>
<svg style="left:1864px;top:268px;" width="20" height="20" viewBox="0 0 20 20"><rect x="1.5" y="1.5" width="6" height="6" fill="none" stroke="#c2c5cb" stroke-width="1.2"/><rect x="11" y="1.5" width="6" height="6" fill="none" stroke="#5aaeea" stroke-width="1.2"/><rect x="1.5" y="11" width="6" height="6" fill="none" stroke="#5aaeea" stroke-width="1.2"/><rect x="11" y="11" width="6" height="6" fill="none" stroke="#5aaeea" stroke-width="1.2"/><path d="M20 16 V20 H16 Z" fill="#c2c5cb"/></svg>
<svg style="left:1864px;top:294px;" width="20" height="20" viewBox="0 0 20 20"><path d="M10 0 L13.5 4.5 H11 V9 H15.5 V6.5 L20 10 L15.5 13.5 V11 H11 V15.5 H13.5 L10 20 L6.5 15.5 H9 V11 H4.5 V13.5 L0 10 L4.5 6.5 V9 H9 V4.5 H6.5 Z" fill="#f2f2f2"/></svg>
<svg style="left:1864px;top:320px;" width="20" height="20" viewBox="0 0 20 20"><path d="M10 3 A7.5 7.5 0 1 0 17.5 10.5" fill="none" stroke="#c2c5cb" stroke-width="1.5"/><path d="M9 -0.5 L15 3 L9 6.5 Z" fill="#f2f2f2"/></svg>
<svg style="left:1864px;top:347px;" width="20" height="20" viewBox="0 0 20 20"><path d="M1 1 H19 V19 H12" fill="none" stroke="#5aaeea" stroke-width="1.3"/><rect x="1.5" y="9.5" width="9" height="9" fill="none" stroke="#c2c5cb" stroke-width="1.3"/></svg>
<svg style="left:1864px;top:373px;" width="20" height="20" viewBox="0 0 20 20"><path d="M10 1 H15 L19 19 H12" fill="none" stroke="#5aaeea" stroke-width="1.3"/><path d="M2 1.5 H9 V18.5 H2 Z" fill="none" stroke="#c2c5cb" stroke-width="1.3"/><path d="M6 14 H12" stroke="#c2c5cb" stroke-width="1.2"/><path d="M14 14 L11 11.8 V16.2 Z" fill="#c2c5cb"/></svg>
<svg style="left:1864px;top:399px;" width="20" height="20" viewBox="0 0 20 20"><path d="M4 1 L13 13 M16 8 L7 13" stroke="#c2c5cb" stroke-width="1.5"/><circle cx="6" cy="15.5" r="2.6" fill="none" stroke="#c2c5cb" stroke-width="1.3"/><circle cx="13.5" cy="16" r="2.6" fill="none" stroke="#c2c5cb" stroke-width="1.3"/><path d="M0 6 H20" stroke="#c2c5cb" stroke-width="1"/></svg>
<svg style="left:1864px;top:426px;" width="20" height="20" viewBox="0 0 20 20"><path d="M17.5 2 V18" stroke="#c2c5cb" stroke-width="1.4"/><path d="M1 13 H8" stroke="#c2c5cb" stroke-width="1.3"/><path d="M9 13 H13" stroke="#5aaeea" stroke-width="1.3" stroke-dasharray="1.5 1.5"/><path d="M17 13 L13 10.7 V15.3 Z" fill="#c2c5cb"/><path d="M4 7 H17" stroke="#c2c5cb" stroke-width="1.1"/></svg>
<svg style="left:1864px;top:452px;" width="20" height="20" viewBox="0 0 20 20"><path d="M14 5 H2.5 V17.5 H17.5 V5" fill="none" stroke="#c2c5cb" stroke-width="1.3"/><rect x="12.7" y="3.7" width="2.6" height="2.6" fill="#5aaeea"/><path d="M14 1 V9" stroke="#c2c5cb" stroke-width="1"/></svg>
<svg style="left:1864px;top:478px;" width="20" height="20" viewBox="0 0 20 20"><path d="M7 5 H2.5 V17.5 H17.5 V5 H13" fill="none" stroke="#c2c5cb" stroke-width="1.3"/><path d="M7 2 V8 M13 2 V8" stroke="#5aaeea" stroke-width="1.3"/></svg>
<svg style="left:1864px;top:504px;" width="20" height="20" viewBox="0 0 20 20"><path d="M0 10 H7 M13 10 H20" stroke="#5aaeea" stroke-width="1.3"/><path d="M10 10 L5.5 7.3 V12.7 Z M10 10 L14.5 7.3 V12.7 Z" fill="#5aaeea"/></svg>
<svg style="left:1864px;top:530px;" width="20" height="20" viewBox="0 0 20 20"><path d="M1 19 V11 L10 2 H19" fill="none" stroke="#c2c5cb" stroke-width="1.3"/><path d="M12 19 H19" stroke="#c2c5cb" stroke-width="1.1"/></svg>
<svg style="left:1864px;top:557px;" width="20" height="20" viewBox="0 0 20 20"><path d="M1 19 V11 C1 5 5 2 11 2 H19" fill="none" stroke="#5aaeea" stroke-width="1.3"/><path d="M12 19 H19" stroke="#c2c5cb" stroke-width="1.1"/></svg>
<svg style="left:1864px;top:583px;" width="20" height="20" viewBox="0 0 20 20"><path d="M2 5 C6 0 12 1 11 7 C10 13 14 14 19 13" fill="none" stroke="#5aaeea" stroke-width="1.3"/><path d="M1 16 H8" stroke="#c2c5cb" stroke-width="1.1"/></svg>
<svg style="left:1864px;top:609px;" width="20" height="20" viewBox="0 0 20 20"><path d="M1 7 L6 2 H19 V13 L14 18 H1 Z" fill="#4a6485" stroke="#c2c5cb" stroke-width="1.2"/><path d="M1 7 H14 V18 M14 7 L19 2" stroke="#c2c5cb" stroke-width="1.2" fill="none"/><path d="M4 5 H17 V15" stroke="#5aaeea" stroke-width="1" fill="none"/></svg>
<span class="t" style="left:64px;top:156.75px;font-size:14px;line-height:14px;color:#e2e4e7;letter-spacing:0.132px;">[−][Сверху][2D-каркас]</span>
<svg style="left:1698px;top:167px;" width="140" height="140" viewBox="0 0 140 140"><circle cx="70" cy="70" r="57.7" fill="none" stroke="#474d57" stroke-width="13.4"/>
<rect x="43" y="43" width="54" height="54" fill="#b5b7bb"/><rect x="53" y="53" width="34" height="34" fill="#a9afba"/></svg>
<span class="t" style="left:1746px;top:229.46px;font-size:16px;line-height:16px;color:#4d5462;letter-spacing:-1.249px;">Сверху</span>
<span class="t" style="left:1760px;top:168.38px;font-size:22px;line-height:22px;color:#c2c4c8;">С</span>
<span class="t" style="left:1702px;top:227.88px;font-size:22px;line-height:22px;color:#c2c4c8;">З</span>
<span class="t" style="left:1821px;top:227.88px;font-size:22px;line-height:22px;color:#c2c4c8;">В</span>
<span class="t" style="left:1757px;top:289.38px;font-size:22px;line-height:22px;color:#c2c4c8;">Ю</span>
<div style="left:1741px;top:331px;width:51px;height:19px;border-radius:5px;border:1px solid #a2a5b8;background:linear-gradient(#9a9db1,#8b8ea3);"></div>
<span class="t" style="left:1746px;top:335.34px;font-size:12px;line-height:12px;color:#4e5464;letter-spacing:0.116px;">МСК</span>
<svg style="left:1777px;top:337px;" width="10" height="7" viewBox="0 0 10 7"><path d="M0.5 0.5 H9.5 L5 6.5 Z" fill="#a2a5b6" stroke="#6d7285" stroke-width="1"/></svg>
<svg style="left:70px;top:808px;" width="100" height="92" viewBox="0 0 100 92"><path d="M11 23 V81 M17 81 H69.5" stroke="#d8dadc" stroke-width="1.2" fill="none"/><rect x="6.5" y="76" width="10" height="10" fill="none" stroke="#d8dadc" stroke-width="1.2"/>
<path d="M12.5 5 L19.5 13 L26.5 5 M19.5 13 V19.5" stroke="#d8dadc" stroke-width="1.2" fill="none"/>
<path d="M73.5 66.5 L87.5 80 M87.5 66.5 L73.5 80" stroke="#d8dadc" stroke-width="1.2" fill="none"/></svg>
<div style="left:102px;top:241px;width:1061px;height:553px;border-radius:8px;box-shadow:0 1px 9px 2px rgba(0,0,0,.6);"></div>
<div style="left:103px;top:242px;width:1059px;height:550px;border-radius:7px;border:1px solid #3f4d5c;background:linear-gradient(180deg,#33485f,#29425d 20%,#27405a);box-shadow:inset 0 0 0 1px rgba(150,170,190,.65);"></div>
<div style="left:105px;top:244px;width:1055px;height:32px;border-radius:5px 5px 0 0;background:linear-gradient(90deg,#5a6b7c 0%,#34445a 2%,#2f4053 35%,#2a394b 60%,#222e3b 100%);overflow:hidden;"><div style="left:-17px;top:-0.39999999999997726px;width:507px;height:33px;border-radius:17px;background:radial-gradient(ellipse at center,rgba(200,212,224,.72) 0%,rgba(185,199,213,.72) 45%,rgba(160,180,200,0) 100%);filter:blur(4px);"></div></div>
<span class="t" style="left:110px;top:254.17px;font-size:13.5px;line-height:13.5px;color:#0c0c0c;letter-spacing:0.155px;">Объемы и картограмма земляных масс по поверхностям из 3D-Граней</span>
<div style="left:109px;top:276px;width:1046px;height:510px;border:1px solid #4a5866;box-shadow:0 0 0 1px rgba(200,218,235,.55);"></div>
<div style="left:110px;top:277px;width:1044px;height:508px;background:#f0f0f0;"></div>
<div style="left:1096px;top:243px;width:58px;height:24px;border:1px solid #1b222b;border-top:none;border-radius:0 0 5px 5px;background:linear-gradient(#4c5a6a 0%,#364352 45%,#232d39 50%,#2c3744 100%);box-shadow:inset 0 0 0 1px rgba(190,205,220,.5);"></div>
<svg style="left:1118px;top:248px;" width="15" height="13" viewBox="0 0 15 13"><path d="M1.5 1.5 L13.5 11.5 M13.5 1.5 L1.5 11.5" stroke="#1c242e" stroke-width="5.2"/><path d="M1.5 1.5 L13.5 11.5 M13.5 1.5 L1.5 11.5" stroke="#ffffff" stroke-width="3.3"/></svg>
<div style="left:120px;top:299px;width:367px;height:91px;border:1px solid #d3dde4;border-radius:4px;box-shadow:inset 1px 1px 0 #fbfcfd,1px 1px 0 #fbfcfd;"></div>
<div style="left:125px;top:297px;width:201px;height:5px;background:#f0f0f0;"></div>
<span class="t" style="left:128px;top:292.00px;font-size:13px;line-height:13px;color:#1c1c1c;letter-spacing:-0.183px;">ЧЕРНАЯ ПОВЕРХНОСТЬ (было)</span>
<div style="left:129px;top:316px;width:285px;height:22px;border:1px solid #707070;border-radius:3px;background:linear-gradient(#f4f4f4 0%,#ececec 48%,#dedede 52%,#cfcfcf 100%);box-shadow:inset 0 0 0 1px #fbfbfb;"></div>
<svg style="left:399px;top:325.5px;" width="9" height="5" viewBox="0 0 9 5"><path d="M0 0 H9 L4.5 5 Z" fill="#111"/></svg>
<span class="t" style="left:133px;top:321.00px;font-size:13px;line-height:13px;color:#1c1c1c;letter-spacing:-0.240px;">GR. 3D-Грани</span>
<div style="left:424px;top:316px;width:52px;height:22px;background:#f0f0f0;border:1px solid #c4c4c4;box-shadow:inset 0 0 0 1px #fafafa;"></div>
<span class="t" style="left:129px;top:348.00px;font-size:13px;line-height:13px;color:#1c1c1c;letter-spacing:-0.217px;">3D-граней: 934 шт.</span>
<span class="t" style="left:307.5px;top:348.00px;font-size:13px;line-height:13px;color:#1c1c1c;letter-spacing:-0.550px;">H мин. = 136,565</span>
<span class="t" style="left:129px;top:370.50px;font-size:13px;line-height:13px;color:#1c1c1c;letter-spacing:-0.576px;">Площадь 3D = 35012,881 м2.</span>
<span class="t" style="left:307.5px;top:370.50px;font-size:13px;line-height:13px;color:#1c1c1c;letter-spacing:-0.525px;">H макс. = 145,600</span>
<div style="left:120px;top:448px;width:367px;height:121px;border:1px solid #d3dde4;border-radius:4px;box-shadow:inset 1px 1px 0 #fbfcfd,1px 1px 0 #fbfcfd;"></div>
<div style="left:124.5px;top:446px;width:212.5px;height:5px;background:#f0f0f0;"></div>
<span class="t" style="left:127.5px;top:441.30px;font-size:13px;line-height:13px;color:#1c1c1c;letter-spacing:-0.110px;">КРАСНАЯ ПОВЕРХНОСТЬ (стало)</span>
<div style="left:129px;top:465.5px;width:285px;height:22px;border:1px solid #707070;border-radius:3px;background:linear-gradient(#f4f4f4 0%,#ececec 48%,#dedede 52%,#cfcfcf 100%);box-shadow:inset 0 0 0 1px #fbfbfb;"></div>
<svg style="left:399px;top:475.0px;" width="9" height="5" viewBox="0 0 9 5"><path d="M0 0 H9 L4.5 5 Z" fill="#111"/></svg>
<span class="t" style="left:133px;top:470.00px;font-size:13px;line-height:13px;color:#1c1c1c;letter-spacing:-0.266px;">GR. 3D-Грани 2</span>
<div style="left:424px;top:465.5px;width:52px;height:22px;background:#f0f0f0;border:1px solid #c4c4c4;box-shadow:inset 0 0 0 1px #fafafa;"></div>
<div style="left:129px;top:498.5px;width:14.5px;height:14.5px;border:1px solid #8e8f8f;background:linear-gradient(135deg,#d8d8d8,#f6f6f6);box-shadow:inset 0 0 0 1px #f4f4f4, inset 0 0 0 2px #b8bcc0;"></div>
<span class="t" style="left:147px;top:499.00px;font-size:13px;line-height:13px;color:#1c1c1c;letter-spacing:0.016px;">Плоскость :</span>
<div style="left:246px;top:498.5px;width:53px;height:22px;background:#f0f0f0;border:1px solid #9a9a9a;box-shadow:inset 1px 1px 0 #d0d0d0;"></div>
<span class="t" style="left:249px;top:501.80px;font-size:13px;line-height:13px;color:#a3a3a3;letter-spacing:-0.713px;">136.565</span>
<span class="t" style="left:129px;top:526.40px;font-size:13px;line-height:13px;color:#1c1c1c;letter-spacing:-0.216px;">3D-граней: 46 шт.</span>
<span class="t" style="left:307.5px;top:526.40px;font-size:13px;line-height:13px;color:#1c1c1c;letter-spacing:-0.550px;">H мин. = 137,185</span>
<span class="t" style="left:129px;top:549.00px;font-size:13px;line-height:13px;color:#1c1c1c;letter-spacing:-0.576px;">Площадь 3D = 34656,987 м2.</span>
<span class="t" style="left:307.5px;top:549.00px;font-size:13px;line-height:13px;color:#1c1c1c;letter-spacing:-0.525px;">H макс. = 140,700</span>
<div style="left:120px;top:627px;width:367px;height:84px;border:1px solid #d3dde4;border-radius:4px;box-shadow:inset 1px 1px 0 #fbfcfd,1px 1px 0 #fbfcfd;"></div>
<div style="left:124.5px;top:625px;width:67.5px;height:5px;background:#f0f0f0;"></div>
<span class="t" style="left:127.5px;top:619.50px;font-size:13px;line-height:13px;color:#1c1c1c;letter-spacing:-0.267px;">ГРАНИЦЫ</span>
<div style="left:130px;top:646.5px;width:118px;height:23px;border:1px solid #707070;border-radius:3px;background:linear-gradient(#f2f2f2 0%,#ebebeb 48%,#dddddd 52%,#cfcfcf 100%);box-shadow:inset 0 0 0 1px #fcfcfc;"></div>
<span class="t" style="left:154.8px;top:652.00px;font-size:13px;line-height:13px;color:#1c1c1c;letter-spacing:-0.292px;">НАРУЖН.-&gt;</span>
<span class="t" style="left:259px;top:652.00px;font-size:13px;line-height:13px;color:#1c1c1c;letter-spacing:0.355px;">Автоматически</span>
<div style="left:130px;top:680.5px;width:117px;height:23px;border:1px solid #707070;border-radius:3px;background:linear-gradient(#f2f2f2 0%,#ebebeb 48%,#dddddd 52%,#cfcfcf 100%);box-shadow:inset 0 0 0 1px #fcfcfc;"></div>
<span class="t" style="left:154.8px;top:685.60px;font-size:13px;line-height:13px;color:#1c1c1c;letter-spacing:0.060px;">ВНУТР.   -&gt;</span>
<span class="t" style="left:257px;top:685.60px;font-size:13px;line-height:13px;color:#1c1c1c;letter-spacing:0.286px;">Нет</span>
<div style="left:120px;top:726px;width:1024px;height:50px;border:1px solid #d3dde4;border-radius:4px;box-shadow:inset 1px 1px 0 #fbfcfd,1px 1px 0 #fbfcfd;"></div>
<div style="left:130px;top:744.5px;width:116px;height:24px;border:1px solid #707070;border-radius:3px;background:linear-gradient(#f2f2f2 0%,#ebebeb 48%,#dddddd 52%,#cfcfcf 100%);box-shadow:inset 0 0 0 1px #fcfcfc;"></div>
<span class="t" style="left:154.8px;top:750.30px;font-size:13px;line-height:13px;color:#1c1c1c;letter-spacing:-0.014px;">Вычислить</span>
<span class="t" style="left:255.5px;top:745.54px;font-size:12px;line-height:12px;color:#b4b4b4;letter-spacing:0.075px;">© 2019-2023 Geodesist</span>
<div style="left:256px;top:765px;width:780px;height:5px;background:#e6e6e6;border:1px solid #a6a6a6;border-top-color:#8c8c8c;"></div>
<div style="left:1046px;top:744.5px;width:86px;height:24px;border:1px solid #707070;border-radius:3px;background:linear-gradient(#f2f2f2 0%,#ebebeb 48%,#dddddd 52%,#cfcfcf 100%);box-shadow:inset 0 0 0 1px #fcfcfc;"></div>
<span class="t" style="left:1070.6px;top:749.50px;font-size:13px;line-height:13px;color:#1c1c1c;letter-spacing:-0.260px;">Выход</span>
<div style="left:498px;top:299px;width:326px;height:412px;border:1px solid #d3dde4;border-radius:4px;box-shadow:inset 1px 1px 0 #fbfcfd,1px 1px 0 #fbfcfd;"></div>
<div style="left:502.5px;top:297px;width:215.5px;height:5px;background:#f0f0f0;"></div>
<span class="t" style="left:505.5px;top:292.00px;font-size:13px;line-height:13px;color:#1c1c1c;letter-spacing:-0.248px;">КАРТОГРАММА ЗЕМЛЯНЫХ МАСС</span>
<div style="left:507px;top:317px;width:14.5px;height:14.5px;border:1px solid #8e8f8f;background:linear-gradient(135deg,#d8d8d8,#f6f6f6);box-shadow:inset 0 0 0 1px #f4f4f4, inset 0 0 0 2px #b8bcc0;"></div>
<svg style="left:509.5px;top:319px;" width="10" height="10" viewBox="0 0 10 10"><path d="M1.2 5.2 L3.8 8.8 L8.8 0.8" stroke="#3e4f8a" stroke-width="1.9" fill="none"/></svg>
<span class="t" style="left:525.5px;top:318.00px;font-size:13px;line-height:13px;color:#1c1c1c;letter-spacing:0.157px;">Создать</span>
<div style="left:507px;top:345.5px;width:117px;height:21.5px;border:1px solid #707070;border-radius:3px;background:linear-gradient(#f4f4f4 0%,#ececec 48%,#dedede 52%,#cfcfcf 100%);box-shadow:inset 0 0 0 1px #fbfbfb;"></div>
<svg style="left:609px;top:354.75px;" width="9" height="5" viewBox="0 0 9 5"><path d="M0 0 H9 L4.5 5 Z" fill="#111"/></svg>
<span class="t" style="left:511px;top:350.00px;font-size:13px;line-height:13px;color:#1c1c1c;letter-spacing:0.072px;">По призмам</span>
<div style="left:507.09999999999997px;top:376.5px;width:14.6px;height:14.6px;border:1px solid #8e8f8f;border-radius:50%;background:radial-gradient(circle at 40% 35%,#e8e8e8,#c4c4c4 60%,#f4f4f4 100%);box-shadow:inset 0 0 0 1px #f4f4f4;"></div>
<div style="left:511.0px;top:380.40000000000003px;width:6.8px;height:6.8px;border-radius:50%;background:radial-gradient(circle at 35% 30%,#b8ecff,#1f86c8 55%,#0a3f78 100%);"></div>
<span class="t" style="left:525.5px;top:377.00px;font-size:13px;line-height:13px;color:#1c1c1c;letter-spacing:0.418px;">Горизонт.</span>
<div style="left:507.09999999999997px;top:406.5px;width:14.6px;height:14.6px;border:1px solid #8e8f8f;border-radius:50%;background:radial-gradient(circle at 40% 35%,#e8e8e8,#c4c4c4 60%,#f4f4f4 100%);box-shadow:inset 0 0 0 1px #f4f4f4;"></div>
<span class="t" style="left:525.5px;top:407.30px;font-size:13px;line-height:13px;color:#1c1c1c;letter-spacing:0.060px;">Вертикал.</span>
<div style="left:507.09999999999997px;top:436.5px;width:14.6px;height:14.6px;border:1px solid #8e8f8f;border-radius:50%;background:radial-gradient(circle at 40% 35%,#e8e8e8,#c4c4c4 60%,#f4f4f4 100%);box-shadow:inset 0 0 0 1px #f4f4f4;"></div>
<span class="t" style="left:525.5px;top:436.80px;font-size:13px;line-height:13px;color:#1c1c1c;letter-spacing:-0.381px;">Обе</span>
<div style="left:634.5px;top:364px;width:179px;height:91px;border:1px solid #d3dde4;border-radius:4px;box-shadow:inset 1px 1px 0 #fbfcfd,1px 1px 0 #fbfcfd;"></div>
<div style="left:639px;top:362px;width:149px;height:5px;background:#f0f0f0;"></div>
<span class="t" style="left:642px;top:356.80px;font-size:13px;line-height:13px;color:#1c1c1c;letter-spacing:0.133px;">Сетка квадратов | Цвет</span>
<span class="t" style="left:649px;top:394.00px;font-size:13px;line-height:13px;color:#1c1c1c;letter-spacing:-0.058px;">Стороны</span>
<div style="left:718px;top:384.5px;width:37.5px;height:22px;background:#f0f0f0;border:1px solid #9a9a9a;box-shadow:inset 1px 1px 0 #d0d0d0;"></div>
<span class="t" style="left:722px;top:386.80px;font-size:13px;line-height:13px;color:#a3a3a3;letter-spacing:-1.106px;">10.00</span>
<div style="left:765.5px;top:381.5px;width:36.5px;height:35.5px;background:#f0f0f0;border:2px solid #1e222a;"></div>
<div style="left:644.5px;top:419px;width:64px;height:21px;border:1px solid #707070;border-radius:3px;background:linear-gradient(#f4f4f4 0%,#ececec 48%,#dedede 52%,#cfcfcf 100%);box-shadow:inset 0 0 0 1px #fbfbfb;"></div>
<svg style="left:693.5px;top:428.0px;" width="9" height="5" viewBox="0 0 9 5"><path d="M0 0 H9 L4.5 5 Z" fill="#111"/></svg>
<span class="t" style="left:649px;top:422.80px;font-size:13px;line-height:13px;color:#1c1c1c;letter-spacing:-0.984px;">10x10</span>
<div style="left:765px;top:429.5px;width:37px;height:22px;background:#f0f0f0;border:1px solid #9a9a9a;box-shadow:inset 1px 1px 0 #d0d0d0;"></div>
<span class="t" style="left:768.5px;top:432.00px;font-size:13px;line-height:13px;color:#a3a3a3;letter-spacing:-1.106px;">10.00</span>
<span class="t" style="left:507.8px;top:469.70px;font-size:13px;line-height:13px;color:#1c1c1c;letter-spacing:-0.157px;">Объединять квыдраты если площадь  &lt;</span>
<div style="left:759.5px;top:465px;width:37.5px;height:22px;background:#ffffff;border:1px solid #3a3a3a;box-shadow:inset -1px -1px 0 #d8d8d8;"></div>
<span class="t" style="left:762px;top:467.40px;font-size:13px;line-height:13px;color:#000;letter-spacing:-1.075px;">0.00</span>
<div style="left:508px;top:509px;width:305.5px;height:46px;border:1px solid #d3dde4;border-radius:4px;box-shadow:inset 1px 1px 0 #fbfcfd,1px 1px 0 #fbfcfd;"></div>
<div style="left:513px;top:507px;width:112px;height:5px;background:#f0f0f0;"></div>
<span class="t" style="left:516px;top:501.20px;font-size:13px;line-height:13px;color:#1c1c1c;letter-spacing:0.248px;">Рабочие отметки</span>
<div style="left:517.5px;top:530px;width:94px;height:21.5px;border:1px solid #707070;border-radius:3px;background:linear-gradient(#f4f4f4 0%,#ececec 48%,#dedede 52%,#cfcfcf 100%);box-shadow:inset 0 0 0 1px #fbfbfb;"></div>
<svg style="left:596.5px;top:539.25px;" width="9" height="5" viewBox="0 0 9 5"><path d="M0 0 H9 L4.5 5 Z" fill="#111"/></svg>
<span class="t" style="left:521.5px;top:534.50px;font-size:13px;line-height:13px;color:#1c1c1c;letter-spacing:-0.148px;">Основные</span>
<span class="t" style="left:640.7px;top:534.50px;font-size:13px;line-height:13px;color:#1c1c1c;letter-spacing:-0.013px;">Высота текста :</span>
<div style="left:750px;top:530px;width:53px;height:21.5px;background:#ffffff;border:1px solid #3a3a3a;box-shadow:inset -1px -1px 0 #d8d8d8;"></div>
<span class="t" style="left:752px;top:533.00px;font-size:13px;line-height:13px;color:#000;letter-spacing:-0.906px;">0.500</span>
<div style="left:583.5px;top:564px;width:229px;height:23.5px;border:1px solid #3c9fd9;border-radius:3px;background:linear-gradient(#eaf6fd 0%,#d9f0fc 48%,#bee6fd 52%,#a7d9f5 100%);box-shadow:inset 0 0 0 1px #f4fbff, 0 0 0 1px rgba(120,190,235,.35);"></div>
<span class="t" style="left:607.3px;top:569.00px;font-size:13px;line-height:13px;color:#1c1c1c;letter-spacing:0.060px;">Дополнительные настройки...</span>
<div style="left:508px;top:604px;width:305.5px;height:100.5px;border:1px solid #d3dde4;border-radius:4px;box-shadow:inset 1px 1px 0 #fbfcfd,1px 1px 0 #fbfcfd;"></div>
<div style="left:513px;top:602px;width:36px;height:5px;background:#f0f0f0;"></div>
<span class="t" style="left:516px;top:595.70px;font-size:13px;line-height:13px;color:#1c1c1c;letter-spacing:-0.403px;">Слой</span>
<div style="left:517.5px;top:624.5px;width:285px;height:21.5px;border:1px solid #707070;border-radius:3px;background:linear-gradient(#f4f4f4 0%,#ececec 48%,#dedede 52%,#cfcfcf 100%);box-shadow:inset 0 0 0 1px #fbfbfb;"></div>
<svg style="left:787.5px;top:633.75px;" width="9" height="5" viewBox="0 0 9 5"><path d="M0 0 H9 L4.5 5 Z" fill="#111"/></svg>
<span class="t" style="left:521.5px;top:629.00px;font-size:13px;line-height:13px;color:#1c1c1c;letter-spacing:-0.074px;">GR. Картограмма</span>
<div style="left:517.5px;top:654.5px;width:285px;height:21.5px;background:#f0f0f0;border:1px solid #828282;box-shadow:inset 1px 1px 0 #5a5a5a;"></div>
<div style="left:517.5px;top:682.2px;width:14.5px;height:14.5px;border:1px solid #8e8f8f;background:linear-gradient(135deg,#d8d8d8,#f6f6f6);box-shadow:inset 0 0 0 1px #f4f4f4, inset 0 0 0 2px #b8bcc0;"></div>
<svg style="left:520.0px;top:684.2px;" width="10" height="10" viewBox="0 0 10 10"><path d="M1.2 5.2 L3.8 8.8 L8.8 0.8" stroke="#3e4f8a" stroke-width="1.9" fill="none"/></svg>
<span class="t" style="left:535.5px;top:682.30px;font-size:13px;line-height:13px;color:#1c1c1c;letter-spacing:0.074px;">Очистить слои картограммы</span>
<div style="left:835px;top:299px;width:312px;height:412px;border:1px solid #d3dde4;border-radius:4px;box-shadow:inset 1px 1px 0 #fbfcfd,1px 1px 0 #fbfcfd;"></div>
<div style="left:839.8px;top:297px;width:83px;height:5px;background:#f0f0f0;"></div>
<span class="t" style="left:842.8px;top:292.00px;font-size:13px;line-height:13px;color:#1c1c1c;letter-spacing:0.616px;">РЕЗУЛЬТАТ</span>
<span class="t" style="left:845.4px;top:320.50px;font-size:13px;line-height:13px;color:#1c1c1c;letter-spacing:0.170px;">Точность :</span>
<div style="left:923.7px;top:320.5px;width:72px;height:20.5px;border:1px solid #707070;border-radius:3px;background:linear-gradient(#f4f4f4 0%,#ececec 48%,#dedede 52%,#cfcfcf 100%);box-shadow:inset 0 0 0 1px #fbfbfb;"></div>
<svg style="left:980.7px;top:329.25px;" width="9" height="5" viewBox="0 0 9 5"><path d="M0 0 H9 L4.5 5 Z" fill="#111"/></svg>
<span class="t" style="left:927px;top:325.00px;font-size:13px;line-height:13px;color:#1c1c1c;letter-spacing:-0.825px;">0.00</span>
<div style="left:845px;top:364px;width:290px;height:285px;background:#ffffff;border:1px solid #e3e9ef;border-top-color:#c6cdd4;"></div>
<span class="t" style="left:847.7px;top:366.62px;font-size:12.5px;line-height:12.5px;color:#000;font-family:'Liberation Mono',monospace;font-weight:bold;letter-spacing:-0.011px;"> Метод вычисления объема [По призмам]</span>
<span class="t" style="left:847.7px;top:381.55px;font-size:12.5px;line-height:12.5px;color:#000;font-family:'Liberation Mono',monospace;font-weight:bold;letter-spacing:-0.011px;">точный, но требует больше времени и</span>
<span class="t" style="left:847.7px;top:396.48px;font-size:12.5px;line-height:12.5px;color:#000;font-family:'Liberation Mono',monospace;font-weight:bold;letter-spacing:-0.011px;">системных ресурсов.</span>
<span class="t" style="left:847.7px;top:411.41px;font-size:12.5px;line-height:12.5px;color:#000;font-family:'Liberation Mono',monospace;font-weight:bold;letter-spacing:-0.011px;"> Так же, чем меньше размер квадратов,</span>
<span class="t" style="left:847.7px;top:426.34px;font-size:12.5px;line-height:12.5px;color:#000;font-family:'Liberation Mono',monospace;font-weight:bold;letter-spacing:-0.011px;">тем больше времени займет вычисление.</span>
<span class="t" style="left:847.7px;top:441.27px;font-size:12.5px;line-height:12.5px;color:#000;font-family:'Liberation Mono',monospace;font-weight:bold;letter-spacing:-0.011px;"> Вычислить объем между поверхностями</span>
<span class="t" style="left:847.7px;top:456.20px;font-size:12.5px;line-height:12.5px;color:#000;font-family:'Liberation Mono',monospace;font-weight:bold;letter-spacing:-0.011px;">можно и БЕЗ создания картограммы</span>
<span class="t" style="left:847.7px;top:471.13px;font-size:12.5px;line-height:12.5px;color:#000;font-family:'Liberation Mono',monospace;font-weight:bold;letter-spacing:-0.011px;">земляных масс.</span>
<span class="t" style="left:845px;top:677.00px;font-size:13px;line-height:13px;color:#ababab;letter-spacing:0.052px;">Высота текста:</span>
<div style="left:951.5px;top:673px;width:52.5px;height:22.5px;background:#f0f0f0;border:1px solid #9a9a9a;box-shadow:inset 1px 1px 0 #d0d0d0;"></div>
<span class="t" style="left:954px;top:675.70px;font-size:13px;line-height:13px;color:#a3a3a3;letter-spacing:-0.806px;">2.500</span>
<div style="left:1028px;top:669.5px;width:106.5px;height:23.5px;border:1px solid #adb2b5;border-radius:3px;background:#f4f4f4;box-shadow:inset 0 0 0 1px #fcfcfc;"></div>
<span class="t" style="left:1053.3px;top:675.40px;font-size:13px;line-height:13px;color:#838383;letter-spacing:0.137px;">Вставить</span>
<svg style="left:0px;top:0px;" width="1920" height="1080" viewBox="0 0 1920 1080"><path d="M815.8 564.7 L1106.3 490.8 L1101.9 472.8 L1199.3 476.8 L1115 526.4 L1111.1 510 L820.1 581.8 Z" fill="#ff0000"/></svg>
<div style="left:1205px;top:367px;width:387px;height:308px;border-radius:8px;box-shadow:0 1px 9px 2px rgba(0,0,0,.6);"></div>
<div style="left:1206px;top:368px;width:385px;height:305px;border-radius:7px;border:1px solid #6f7f8f;background:linear-gradient(180deg,#6d8299 0%,#8fa0b2 28%,#3c5673 38%,#2f4966 100%);box-shadow:inset 0 0 0 1px rgba(215,228,240,.8);"></div>
<div style="left:1208px;top:370px;width:381px;height:32px;border-radius:5px 5px 0 0;background:linear-gradient(100deg,#7d90a5 0%,#56708c 12%,#2f4b69 45%,#2c4868 58%,#60788f 74%,#7a8ea3 86%,#5e758d 100%);overflow:hidden;"><div style="left:-16.40000000000009px;top:-0.39999999999997726px;width:231px;height:33px;border-radius:17px;background:radial-gradient(ellipse at center,rgba(200,212,224,.92) 0%,rgba(185,199,213,.92) 45%,rgba(160,180,200,0) 100%);filter:blur(4px);"></div></div>
<span class="t" style="left:1213.6px;top:380.17px;font-size:13.5px;line-height:13.5px;color:#0c0c0c;letter-spacing:0.187px;">Дополнительные настройки</span>
<div style="left:1212px;top:402px;width:373px;height:265px;border:1px solid #4a5866;box-shadow:0 0 0 1px rgba(200,218,235,.55);"></div>
<div style="left:1213px;top:403px;width:371px;height:263px;background:#f0f0f0;"></div>
<div style="left:1525px;top:369px;width:59px;height:24px;border:1px solid #3a1512;border-top:none;border-radius:0 0 5px 5px;background:linear-gradient(#e9a99b 0%,#d4705f 45%,#c03a25 50%,#d8684a 100%);box-shadow:inset 0 0 0 1px rgba(255,225,215,.6);"></div>
<svg style="left:1547px;top:374px;" width="15" height="13" viewBox="0 0 15 13"><path d="M1.5 1.5 L13.5 11.5 M13.5 1.5 L1.5 11.5" stroke="#47150f" stroke-width="5.2"/><path d="M1.5 1.5 L13.5 11.5 M13.5 1.5 L1.5 11.5" stroke="#ffffff" stroke-width="3.3"/></svg>
<div style="left:1283px;top:424.5px;width:154.5px;height:45px;border:1px solid #d3dde4;border-radius:4px;box-shadow:inset 1px 1px 0 #fbfcfd,1px 1px 0 #fbfcfd;"></div>
<div style="left:1287.8px;top:422.5px;width:136.6px;height:5px;background:#f0f0f0;"></div>
<span class="t" style="left:1290.8px;top:417.50px;font-size:13px;line-height:13px;color:#1c1c1c;letter-spacing:0.018px;">Линия нулевых работ</span>
<div style="left:1341px;top:442px;width:37px;height:21.5px;background:#ffff00;border:1px solid #9aa0a6;"></div>
<div style="left:1448px;top:424.5px;width:67.5px;height:45px;border:1px solid #d3dde4;border-radius:4px;box-shadow:inset 1px 1px 0 #fbfcfd,1px 1px 0 #fbfcfd;"></div>
<div style="left:1453px;top:422.5px;width:49.5px;height:5px;background:#f0f0f0;"></div>
<span class="t" style="left:1456px;top:417.50px;font-size:13px;line-height:13px;color:#1c1c1c;letter-spacing:0.306px;">Контур</span>
<div style="left:1463px;top:442px;width:36.5px;height:21.5px;background:#ff0000;border:1px solid #9aa0a6;"></div>
<div style="left:1223px;top:486px;width:180.5px;height:136.5px;border:1px solid #d3dde4;border-radius:4px;box-shadow:inset 1px 1px 0 #fbfcfd,1px 1px 0 #fbfcfd;"></div>
<div style="left:1228px;top:484px;width:111.4px;height:5px;background:#f0f0f0;"></div>
<span class="t" style="left:1231px;top:478.20px;font-size:13px;line-height:13px;color:#1c1c1c;letter-spacing:0.206px;">Рабочая отметка</span>
<div style="left:1228.5px;top:511px;width:97.5px;height:45.5px;border:1px solid #d3dde4;border-radius:4px;box-shadow:inset 1px 1px 0 #fbfcfd,1px 1px 0 #fbfcfd;"></div>
<span class="t" style="left:1242.5px;top:504.10px;font-size:13px;line-height:13px;color:#1c1c1c;">-</span>
<span class="t" style="left:1273.5px;top:504.10px;font-size:13px;line-height:13px;color:#1c1c1c;">0</span>
<span class="t" style="left:1305.5px;top:504.10px;font-size:13px;line-height:13px;color:#1c1c1c;">+</span>
<div style="left:1239px;top:509px;width:15px;height:5px;background:#f0f0f0;"></div>
<div style="left:1270px;top:509px;width:15px;height:5px;background:#f0f0f0;"></div>
<div style="left:1302px;top:509px;width:15px;height:5px;background:#f0f0f0;"></div>
<span class="t" style="left:1242.5px;top:504.10px;font-size:13px;line-height:13px;color:#1c1c1c;">-</span>
<span class="t" style="left:1273.5px;top:504.10px;font-size:13px;line-height:13px;color:#1c1c1c;">0</span>
<span class="t" style="left:1305.5px;top:504.10px;font-size:13px;line-height:13px;color:#1c1c1c;">+</span>
<div style="left:1234px;top:528.5px;width:22px;height:21px;background:#00ff00;border:1px solid #9aa0a6;"></div>
<div style="left:1266px;top:528.5px;width:22px;height:21px;background:#0000ff;border:1px solid #9aa0a6;"></div>
<div style="left:1298px;top:528.5px;width:22px;height:21px;background:#ff00ff;border:1px solid #9aa0a6;"></div>
<div style="left:1327.5px;top:511px;width:69px;height:45.5px;border:1px solid #d3dde4;border-radius:4px;box-shadow:inset 1px 1px 0 #fbfcfd,1px 1px 0 #fbfcfd;"></div>
<div style="left:1332.5px;top:509px;width:55.7px;height:5px;background:#f0f0f0;"></div>
<span class="t" style="left:1335.5px;top:504.10px;font-size:13px;line-height:13px;color:#1c1c1c;letter-spacing:-0.040px;">Красная</span>
<div style="left:1342.7px;top:528.5px;width:37px;height:21px;background:#ff0000;border:1px solid #9aa0a6;"></div>
<div style="left:1327.5px;top:572px;width:69px;height:46px;border:1px solid #d3dde4;border-radius:4px;box-shadow:inset 1px 1px 0 #fbfcfd,1px 1px 0 #fbfcfd;"></div>
<div style="left:1332.5px;top:570px;width:50.4px;height:5px;background:#f0f0f0;"></div>
<span class="t" style="left:1335.5px;top:564.80px;font-size:13px;line-height:13px;color:#1c1c1c;letter-spacing:-0.029px;">Черная</span>
<div style="left:1342.7px;top:589.3px;width:37px;height:21.5px;background:#ffffff;border:1px solid #9aa0a6;"></div>
<div style="left:1413.5px;top:486px;width:161.5px;height:105.5px;border:1px solid #d3dde4;border-radius:4px;box-shadow:inset 1px 1px 0 #fbfcfd,1px 1px 0 #fbfcfd;"></div>
<div style="left:1418.4px;top:484px;width:129.8px;height:5px;background:#f0f0f0;"></div>
<span class="t" style="left:1421.4px;top:478.20px;font-size:13px;line-height:13px;color:#1c1c1c;letter-spacing:-0.201px;">Объемы | Штриховка</span>
<div style="left:1418.5px;top:506px;width:14.5px;height:14.5px;border:1px solid #8e8f8f;background:linear-gradient(135deg,#d8d8d8,#f6f6f6);box-shadow:inset 0 0 0 1px #f4f4f4, inset 0 0 0 2px #b8bcc0;"></div>
<svg style="left:1421.0px;top:508px;" width="10" height="10" viewBox="0 0 10 10"><path d="M1.2 5.2 L3.8 8.8 L8.8 0.8" stroke="#3e4f8a" stroke-width="1.9" fill="none"/></svg>
<span class="t" style="left:1436.2px;top:506.60px;font-size:13px;line-height:13px;color:#1c1c1c;letter-spacing:-0.171px;">Выемка:</span>
<div style="left:1418.5px;top:535.5px;width:14.5px;height:14.5px;border:1px solid #8e8f8f;background:linear-gradient(135deg,#d8d8d8,#f6f6f6);box-shadow:inset 0 0 0 1px #f4f4f4, inset 0 0 0 2px #b8bcc0;"></div>
<svg style="left:1421.0px;top:537.5px;" width="10" height="10" viewBox="0 0 10 10"><path d="M1.2 5.2 L3.8 8.8 L8.8 0.8" stroke="#3e4f8a" stroke-width="1.9" fill="none"/></svg>
<span class="t" style="left:1436.2px;top:536.50px;font-size:13px;line-height:13px;color:#1c1c1c;letter-spacing:-0.155px;">Насыпь:</span>
<div style="left:1418.5px;top:565.8px;width:14.5px;height:14.5px;border:1px solid #8e8f8f;background:linear-gradient(135deg,#d8d8d8,#f6f6f6);box-shadow:inset 0 0 0 1px #f4f4f4, inset 0 0 0 2px #b8bcc0;"></div>
<svg style="left:1421.0px;top:567.8px;" width="10" height="10" viewBox="0 0 10 10"><path d="M1.2 5.2 L3.8 8.8 L8.8 0.8" stroke="#3e4f8a" stroke-width="1.9" fill="none"/></svg>
<span class="t" style="left:1436.2px;top:566.40px;font-size:13px;line-height:13px;color:#1c1c1c;letter-spacing:-0.351px;">0-обл.:</span>
<div style="left:1510px;top:502.7px;width:22.6px;height:22px;background:#00ff00;border:1px solid #9aa0a6;"></div>
<div style="left:1542px;top:502.7px;width:22.7px;height:22px;background:#00ff00;border:1px solid #9aa0a6;"></div>
<div style="left:1510px;top:532.6px;width:22.6px;height:22px;background:#ff00ff;border:1px solid #9aa0a6;"></div>
<div style="left:1542px;top:532.6px;width:22.7px;height:22px;background:#ff00ff;border:1px solid #9aa0a6;"></div>
<div style="left:1510px;top:562.5px;width:22.6px;height:22px;background:#ffffff;border:1px solid #9aa0a6;"></div>
<div style="left:1542px;top:562.5px;width:22.7px;height:22px;background:#ffffff;border:1px solid #9aa0a6;"></div>
<span class="t" style="left:1448.2px;top:610.74px;font-size:12px;line-height:12px;color:#b4b4b4;letter-spacing:0.051px;">© 2019-2023 Geodesist</span>
<div style="left:1351px;top:632.5px;width:95px;height:23px;border:1px solid #3c7fb1;border-radius:3px;background:linear-gradient(#f2f2f2 0%,#ebebeb 48%,#dddddd 52%,#cfcfcf 100%);box-shadow:inset 0 0 0 1px #5fd3f2, inset 0 0 0 2px #e4f6fc;"></div>
<span class="t" style="left:1390.5px;top:637.90px;font-size:13px;line-height:13px;color:#1c1c1c;letter-spacing:-0.556px;">Ok</span>
<div style="left:62px;top:913px;width:1267px;height:30px;background:#3b4453;border:1px solid #4a5262;"></div>
<svg style="left:74px;top:917px;" width="20" height="20" viewBox="0 0 20 20"><path d="M1.5 2 V18 M18.5 2 V18" stroke="#d4d6da" stroke-width="1.3"/><path d="M2 10 H18" stroke="#5aaeea" stroke-width="1.2"/><path d="M2 10 l4 -2 v4z M18 10 l-4 -2 v4z" fill="#5aaeea"/></svg>
<svg style="left:101px;top:917px;" width="20" height="20" viewBox="0 0 20 20"><path d="M1 5 L5 1 M15 19 L19 15" stroke="#d4d6da" stroke-width="1.3"/><path d="M4 4 L16 16" stroke="#5aaeea" stroke-width="1.2"/><path d="M3 3 l4.5 1.5 l-3 3z M17 17 l-4.5 -1.5 l3 -3z" fill="#5aaeea"/></svg>
<svg style="left:128px;top:917px;" width="20" height="20" viewBox="0 0 20 20"><path d="M2 18 C2 9 9 2 18 2" stroke="#5aaeea" stroke-width="1.3" fill="none"/><path d="M6 18 C6 11 11 6 18 6" stroke="#d4d6da" stroke-width="1.3" fill="none"/><path d="M0 18.5 H8 M18.5 0 V8" stroke="#d4d6da" stroke-width="1.2"/></svg>
<svg style="left:155px;top:917px;" width="20" height="20" viewBox="0 0 20 20"><path d="M2 3 V17 H19 M2 10 H12 M9 1 V17" stroke="#d4d6da" stroke-width="1.2" fill="none"/><path d="M7 0 L11 4 M11 0 L7 4" stroke="#5aaeea" stroke-width="1.1"/><path d="M14.5 7 L16 9 L17.5 7 M16 9 V11" stroke="#5aaeea" stroke-width="1" fill="none"/></svg>
<svg style="left:188px;top:917px;" width="20" height="20" viewBox="0 0 20 20"><path d="M1 18 C2 8 8 2 18 1" stroke="#d4d6da" stroke-width="1.3" fill="none"/><path d="M8 8 L18 18" stroke="#5aaeea" stroke-width="1.2"/><path d="M7 7 l5 1.3 l-3.5 3.5z" fill="#5aaeea"/></svg>
<svg style="left:215px;top:917px;" width="20" height="20" viewBox="0 0 20 20"><path d="M1 18 C2 8 8 2 18 1" stroke="#d4d6da" stroke-width="1.3" fill="none"/><path d="M8 8 L12 14 L14 9 L19 17" stroke="#5aaeea" stroke-width="1.2" fill="none"/><path d="M7 7 l5 1.3 l-3.5 3.5z" fill="#5aaeea"/></svg>
<svg style="left:243px;top:917px;" width="20" height="20" viewBox="0 0 20 20"><circle cx="10" cy="10" r="8.5" stroke="#d4d6da" stroke-width="1.3" fill="none"/><path d="M4.5 4.5 L15.5 15.5" stroke="#5aaeea" stroke-width="1.2"/><path d="M3.5 3.5 l5 1.3 l-3.5 3.5z M16.5 16.5 l-5 -1.3 l3.5 -3.5z" fill="#5aaeea"/></svg>
<svg style="left:270px;top:917px;" width="20" height="20" viewBox="0 0 20 20"><path d="M1 18 H19 M2 18 L14 2" stroke="#d4d6da" stroke-width="1.3" fill="none"/><path d="M11 7 C14 9 16 13 16 17" stroke="#5aaeea" stroke-width="1.2" fill="none"/><path d="M16 18.5 l-2 -4.5 h4z" fill="#5aaeea"/></svg>
<svg style="left:302px;top:917px;" width="20" height="20" viewBox="0 0 20 20"><path d="M2.5 3 V19 M17.5 3 V19 M2 4.5 H18" stroke="#d4d6da" stroke-width="1.3" fill="none"/><path d="M2.5 4.5 l3.5 -2 v4z M17.5 4.5 l-3.5 -2 v4z" fill="#d4d6da"/><path d="M11.5 8 L7 14 H10.5 L8.5 19 L14 12.5 H10.5 L13 8 Z" fill="#f3c14e"/></svg>
<svg style="left:330px;top:917px;" width="20" height="20" viewBox="0 0 20 20"><path d="M1.5 3 V19 M18.5 3 V11 M12.5 12 V19" stroke="#d4d6da" stroke-width="1.3"/><path d="M2 7 H18 M2 15 H12" stroke="#5aaeea" stroke-width="1.2"/><path d="M2 7 l3.5 -2 v4z M18 7 l-3.5 -2 v4z M2 15 l3.5 -2 v4z M12 15 l-3.5 -2 v4z" fill="#5aaeea"/></svg>
<svg style="left:357px;top:917px;" width="20" height="20" viewBox="0 0 20 20"><path d="M2.5 3 V18 M9.5 3 V18 M16.5 3 V18" stroke="#d4d6da" stroke-width="1.3"/><path d="M0 8 H20" stroke="#d4d6da" stroke-width="1.2"/><path d="M9.5 8 l-3 -1.8 v3.6z M9.5 8 l3 -1.8 v3.6z" fill="#d4d6da"/></svg>
<svg style="left:384px;top:917px;" width="20" height="20" viewBox="0 0 20 20"><path d="M1 2.5 H19 M1 17.5 H19" stroke="#d4d6da" stroke-width="1.3"/><path d="M1 2.5 l3 -2 v4z M19 2.5 l-3 -2 v4z M1 17.5 l3 -2 v4z M19 17.5 l-3 -2 v4z" fill="#d4d6da"/><rect x="7" y="4.5" width="6" height="11" fill="#f3c14e"/><path d="M10.5 6 H13 M10.5 8.5 H13 M10.5 11 H13 M10.5 13.5 H13" stroke="#7a5a10" stroke-width="1"/></svg>
<svg style="left:411px;top:917px;" width="20" height="20" viewBox="0 0 20 20"><path d="M0 7 H6 M14 7 H20 M10 1 V12" stroke="#5aaeea" stroke-width="1.2"/><path d="M10 13 V16 M6 19 H14" stroke="#d4d6da" stroke-width="1.3"/><path d="M10 19 l-3 -4 h6z" fill="#d4d6da"/><path d="M6 7 l3 -1.8 v3.6z M20 7 l-3.5 -1.8 v3.6z" fill="#5aaeea"/></svg>
<svg style="left:444px;top:917px;" width="20" height="20" viewBox="0 0 20 20"><rect x="1.5" y="4.5" width="17" height="10" fill="none" stroke="#d4d6da" stroke-width="1.2"/><path d="M10 4.5 V14.5 M15 4.5 V14.5" stroke="#d4d6da" stroke-width="1"/><circle cx="5.8" cy="9.5" r="2.6" fill="none" stroke="#d4d6da" stroke-width="1"/><path d="M5.8 5.5 V13.5 M2.5 9.5 H9 M12 7 H13 V12" stroke="#d4d6da" stroke-width="1" fill="none"/></svg>
<svg style="left:471px;top:917px;" width="20" height="20" viewBox="0 0 20 20"><circle cx="10" cy="10" r="8.3" stroke="#d4d6da" stroke-width="1.2" fill="none"/><path d="M10 6.5 V13.5 M6.5 10 H13.5" stroke="#5aaeea" stroke-width="1.2"/></svg>
<svg style="left:498px;top:917px;" width="20" height="20" viewBox="0 0 20 20"><path d="M2.5 3 V19 M17.5 3 V19 M2 5 H18" stroke="#d4d6da" stroke-width="1.3" fill="none"/><path d="M2.5 5 l3.5 -2 v4z M17.5 5 l-3.5 -2 v4z" fill="#d4d6da"/><path d="M6 13 L9 17 L15 9" stroke="#4fc470" stroke-width="2" fill="none"/></svg>
<svg style="left:526px;top:917px;" width="20" height="20" viewBox="0 0 20 20"><path d="M0 11 H6 L9 3 L12 18 L14 11 H20" stroke="#d4d6da" stroke-width="1.3" fill="none"/><path d="M0 11 l4 -2 v4z" fill="#5aaeea"/></svg>
<svg style="left:558px;top:917px;" width="20" height="20" viewBox="0 0 20 20"><path d="M2.5 9 V19 M17.5 9 V19 M2 14 H18" stroke="#d4d6da" stroke-width="1.2" fill="none"/><path d="M2.5 14 l3 -1.8 v3.6z M17.5 14 l-3 -1.8 v3.6z" fill="#d4d6da"/><path d="M8 9 L15 1 L18 3.5 L11 11.5 L7.5 12.5 Z" fill="#f3c14e"/><circle cx="17" cy="2" r="1.6" fill="#e05a5a"/></svg>
<svg style="left:586px;top:917px;" width="20" height="20" viewBox="0 0 20 20"><path d="M2.5 11 V19 M17.5 11 V19 M2 16 H18" stroke="#d4d6da" stroke-width="1.2" fill="none"/><path d="M2.5 16 l3 -1.8 v3.6z M17.5 16 l-3 -1.8 v3.6z" fill="#d4d6da"/><text x="10" y="12" text-anchor="middle" font-family="Liberation Sans,sans-serif" font-size="14" fill="#d4d6da">A</text></svg>
<svg style="left:613px;top:917px;" width="20" height="20" viewBox="0 0 20 20"><path d="M2.5 3 V19 M17.5 3 V19 M2 5 H18" stroke="#d4d6da" stroke-width="1.3" fill="none"/><path d="M2.5 5 l3.5 -2 v4z M17.5 5 l-3.5 -2 v4z" fill="#d4d6da"/><path d="M6.5 13 A4 4 0 0 1 14 11.5 M13.5 14 A4 4 0 0 1 6 15.5" stroke="#4fc470" stroke-width="1.6" fill="none"/><path d="M15 9 v4 h-4z M5 18 v-4 h4z" fill="#4fc470"/></svg>
<svg style="left:787px;top:917px;" width="20" height="20" viewBox="0 0 20 20"><path d="M1.5 9 V19 M17.5 9 V19 M1.5 14.5 H17.5" stroke="#d4d6da" stroke-width="1.2" fill="none"/><path d="M1.5 14.5 l3.5 -2 v4z M17.5 14.5 l-3.5 -2 v4z" fill="#d4d6da"/><path d="M8 11 L16 2 L18.5 4.5 L11 12.5 Z" fill="#d9a860"/></svg>
<svg style="left:825px;top:917px;" width="20" height="20" viewBox="0 0 20 20"><rect x="1" y="7" width="16" height="7" fill="#f3c14e"/><path d="M4 7 V10 M7 7 V11 M10 7 V10 M13 7 V11" stroke="#7a5a10" stroke-width="1"/><path d="M1 3 H17 M1 1 V5 M17 1 V5" stroke="#d4d6da" stroke-width="1.1"/><path d="M20 16 V20 H16 Z" fill="#d4d6da"/></svg>
<svg style="left:853px;top:917px;" width="20" height="20" viewBox="0 0 20 20"><path d="M1 7 L6 3 H15 V12 L10 16 H1 Z" fill="#c4c4c4"/><path d="M1 7 H10 V16 M10 7 L15 3" stroke="#8a8d93" stroke-width="1" fill="none"/><rect x="10" y="9" width="9" height="10" fill="#ececec"/><rect x="11.5" y="10.5" width="6" height="3" fill="#5aaeea"/><path d="M11.5 15.5 H17.5 M11.5 17.5 H15" stroke="#777" stroke-width="1"/></svg>
<svg style="left:885px;top:917px;" width="20" height="20" viewBox="0 0 20 20"><rect x="1" y="1" width="13" height="15" fill="#c9c9c9"/><path d="M3 4 H5 M6.5 4 H12 M3 7 H5 M6.5 7 H12 M3 10 H5 M6.5 10 H12" stroke="#6b6f77" stroke-width="1"/><circle cx="15" cy="15" r="4.6" fill="#5aaeea"/><text x="15" y="18.3" text-anchor="middle" font-family="Liberation Serif,serif" font-weight="bold" font-size="9" fill="#fff">i</text></svg>
<svg style="left:912px;top:917px;" width="20" height="20" viewBox="0 0 20 20"><path d="M1 2 V8 M4.5 2 V8 M0 8 H6" stroke="#d4d6da" stroke-width="1.1" fill="none"/><circle cx="11.5" cy="9.5" r="5.3" fill="none" stroke="#d4d6da" stroke-width="1.3"/><circle cx="11.5" cy="9.5" r="1.6" fill="#5aaeea"/><path d="M15.5 13.5 L19.5 17.5" stroke="#f3c14e" stroke-width="1.8"/><path d="M2 12 V19 H12" stroke="#d4d6da" stroke-width="1.1" fill="none"/></svg>
<svg style="left:950px;top:917px;" width="20" height="20" viewBox="0 0 20 20"><path d="M4 2 V16 H18" stroke="#d4d6da" stroke-width="1.3" fill="none"/><path d="M4 0 l-2.2 4 h4.4z M20 16 l-4 -2.2 v4.4z" fill="#d4d6da"/><path d="M5 15 L13 7" stroke="#5aaeea" stroke-width="1.2"/><path d="M14.5 5.5 l-4.5 1.5 l3 3z" fill="#5aaeea"/></svg>
<svg style="left:983px;top:917px;" width="20" height="20" viewBox="0 0 20 20"><path d="M4 2 V16 H18" stroke="#d4d6da" stroke-width="1.3" fill="none"/><path d="M4 0 l-2.2 4 h4.4z M20 16 l-4 -2.2 v4.4z" fill="#d4d6da"/><circle cx="11.5" cy="7" r="5" fill="#5aaeea"/><path d="M8 5 Q11 8 15 5.5 M10 2.5 Q9 7 13 11.5" stroke="#fff" stroke-width=".9" fill="none"/></svg>
<svg style="left:1010px;top:917px;" width="20" height="20" viewBox="0 0 20 20"><path d="M4 2 V16 H18" stroke="#d4d6da" stroke-width="1.3" fill="none"/><path d="M4 0 l-2.2 4 h4.4z M20 16 l-4 -2.2 v4.4z" fill="#d4d6da"/><path d="M7 7 L12 3 V5.5 C16 5.5 18 7 18.5 11 C16.5 9 15 8.5 12 8.5 V11 Z" fill="#5aaeea"/></svg>
<svg style="left:1043px;top:917px;" width="20" height="20" viewBox="0 0 20 20"><path d="M4 2 V16 H18" stroke="#d4d6da" stroke-width="1.3" fill="none"/><path d="M4 0 l-2.2 4 h4.4z M20 16 l-4 -2.2 v4.4z" fill="#d4d6da"/><path d="M7 7 H15 V13 H7 Z" fill="#5aaeea"/><path d="M7 7 L10 4 H18 L15 7 M18 4 V10 L15 13" stroke="#5aaeea" stroke-width="1" fill="none"/></svg>
<svg style="left:1070px;top:917px;" width="20" height="20" viewBox="0 0 20 20"><path d="M4 2 V16 H18" stroke="#d4d6da" stroke-width="1.3" fill="none"/><path d="M4 0 l-2.2 4 h4.4z M20 16 l-4 -2.2 v4.4z" fill="#d4d6da"/><rect x="8" y="4" width="8" height="8" fill="#5aaeea"/></svg>
<svg style="left:1097px;top:917px;" width="20" height="20" viewBox="0 0 20 20"><path d="M4 2 V16 H18" stroke="#d4d6da" stroke-width="1.3" fill="none"/><path d="M4 0 l-2.2 4 h4.4z M20 16 l-4 -2.2 v4.4z" fill="#d4d6da"/><rect x="8" y="4" width="9" height="8" fill="none" stroke="#5aaeea" stroke-width="1.2"/><path d="M6 8 H19 M12.5 2 V14" stroke="#5aaeea" stroke-width="1"/></svg>
<svg style="left:1130px;top:917px;" width="20" height="20" viewBox="0 0 20 20"><path d="M4 2 V16 H18" stroke="#d4d6da" stroke-width="1.3" fill="none"/><path d="M4 0 l-2.2 4 h4.4z M20 16 l-4 -2.2 v4.4z" fill="#d4d6da"/><path d="M7 13 L15 5" stroke="#5aaeea" stroke-width="1.1"/><path d="M12 1 L16 5 M16 1 L12 5" stroke="#5aaeea" stroke-width="1"/></svg>
<svg style="left:1157px;top:917px;" width="20" height="20" viewBox="0 0 20 20"><path d="M4 2 V16 H18" stroke="#d4d6da" stroke-width="1.3" fill="none"/><path d="M4 0 l-2.2 4 h4.4z M20 16 l-4 -2.2 v4.4z" fill="#d4d6da"/><text x="13" y="11" text-anchor="middle" font-family="Liberation Sans,sans-serif" font-size="12" fill="#5aaeea">Z</text></svg>
<svg style="left:1184px;top:917px;" width="20" height="20" viewBox="0 0 20 20"><path d="M4 2 V16 H18" stroke="#d4d6da" stroke-width="1.3" fill="none"/><path d="M4 0 l-2.2 4 h4.4z M20 16 l-4 -2.2 v4.4z" fill="#d4d6da"/><text x="13" y="12" text-anchor="middle" font-family="Liberation Sans,sans-serif" font-size="12" fill="#5aaeea">3</text></svg>
<svg style="left:1217px;top:917px;" width="20" height="20" viewBox="0 0 20 20"><path d="M4 2 V16 H18" stroke="#d4d6da" stroke-width="1.3" fill="none"/><path d="M4 0 l-2.2 4 h4.4z M20 16 l-4 -2.2 v4.4z" fill="#d4d6da"/><path d="M8 8 A4 4 0 1 0 13 5" stroke="#5aaeea" stroke-width="1.2" fill="none"/><text x="16" y="6" text-anchor="middle" font-family="Liberation Sans,sans-serif" font-size="8" font-weight="bold" fill="#5aaeea">X</text></svg>
<svg style="left:1244px;top:917px;" width="20" height="20" viewBox="0 0 20 20"><path d="M4 2 V16 H18" stroke="#d4d6da" stroke-width="1.3" fill="none"/><path d="M4 0 l-2.2 4 h4.4z M20 16 l-4 -2.2 v4.4z" fill="#d4d6da"/><path d="M8 8 A4 4 0 1 0 13 5" stroke="#5aaeea" stroke-width="1.2" fill="none"/><text x="16" y="6" text-anchor="middle" font-family="Liberation Sans,sans-serif" font-size="8" font-weight="bold" fill="#5aaeea">Y</text></svg>
<svg style="left:1271px;top:917px;" width="20" height="20" viewBox="0 0 20 20"><path d="M4 2 V16 H18" stroke="#d4d6da" stroke-width="1.3" fill="none"/><path d="M4 0 l-2.2 4 h4.4z M20 16 l-4 -2.2 v4.4z" fill="#d4d6da"/><path d="M8 8 A4 4 0 1 0 13 5" stroke="#5aaeea" stroke-width="1.2" fill="none"/><text x="16" y="6" text-anchor="middle" font-family="Liberation Sans,sans-serif" font-size="8" font-weight="bold" fill="#5aaeea">Z</text></svg>
<svg style="left:1304px;top:917px;" width="20" height="20" viewBox="0 0 20 20"><path d="M4 2 V16 H18" stroke="#d4d6da" stroke-width="1.3" fill="none"/><path d="M4 0 l-2.2 4 h4.4z M20 16 l-4 -2.2 v4.4z" fill="#d4d6da"/><rect x="7" y="2.5" width="10" height="9" fill="none" stroke="#d4d6da" stroke-width="1.2"/><path d="M5 7 H19 M12 0.5 V13.5" stroke="#d4d6da" stroke-width="1"/><path d="M14 6 L19 11" stroke="#5aaeea" stroke-width="1.2"/></svg>
<div style="left:183px;top:916px;width:1px;height:24px;background:#566072;"></div>
<div style="left:297px;top:916px;width:1px;height:24px;background:#566072;"></div>
<div style="left:438px;top:916px;width:1px;height:24px;background:#566072;"></div>
<div style="left:553px;top:916px;width:1px;height:24px;background:#566072;"></div>
<div style="left:641px;top:916px;width:1px;height:24px;background:#566072;"></div>
<div style="left:1331px;top:916px;width:1px;height:24px;background:#566072;"></div>
<div style="left:743px;top:916px;width:1px;height:24px;background:#2b3240;"></div>
<div style="left:814px;top:916px;width:1px;height:24px;background:#2b3240;"></div>
<div style="left:880px;top:916px;width:1px;height:24px;background:#2b3240;"></div>
<div style="left:937px;top:916px;width:1px;height:24px;background:#2b3240;"></div>
<div style="left:977px;top:916px;width:1px;height:24px;background:#2b3240;"></div>
<div style="left:1035px;top:916px;width:1px;height:24px;background:#2b3240;"></div>
<div style="left:1124px;top:916px;width:1px;height:24px;background:#2b3240;"></div>
<div style="left:1211px;top:916px;width:1px;height:24px;background:#2b3240;"></div>
<div style="left:1298px;top:916px;width:1px;height:24px;background:#2b3240;"></div>
<div style="left:644px;top:914px;width:139px;height:25px;background:#f7f7f7;border:1px solid #fdfdfd;"></div>
<span class="t" style="left:665.5px;top:919.65px;font-size:14px;line-height:14px;color:#777a80;letter-spacing:-0.234px;">Geodesist x100</span>
<svg style="left:769px;top:924px;" width="9" height="5" viewBox="0 0 9 5"><path d="M0 0 H9 L4.5 5 Z" fill="#6a6d73"/></svg>
<svg style="left:32px;top:952px;" width="22" height="6" viewBox="0 0 22 6"><rect x="0.0" y="0.0" width="1.5" height="1.6" fill="#dfe2e6"/><rect x="0.0" y="3.8" width="1.5" height="1.6" fill="#dfe2e6"/><rect x="2.7" y="0.0" width="1.5" height="1.6" fill="#dfe2e6"/><rect x="2.7" y="3.8" width="1.5" height="1.6" fill="#dfe2e6"/><rect x="5.4" y="0.0" width="1.5" height="1.6" fill="#dfe2e6"/><rect x="5.4" y="3.8" width="1.5" height="1.6" fill="#dfe2e6"/><rect x="8.100000000000001" y="0.0" width="1.5" height="1.6" fill="#dfe2e6"/><rect x="8.100000000000001" y="3.8" width="1.5" height="1.6" fill="#dfe2e6"/><rect x="10.8" y="0.0" width="1.5" height="1.6" fill="#dfe2e6"/><rect x="10.8" y="3.8" width="1.5" height="1.6" fill="#dfe2e6"/><rect x="13.5" y="0.0" width="1.5" height="1.6" fill="#dfe2e6"/><rect x="13.5" y="3.8" width="1.5" height="1.6" fill="#dfe2e6"/><rect x="16.200000000000003" y="0.0" width="1.5" height="1.6" fill="#dfe2e6"/><rect x="16.200000000000003" y="3.8" width="1.5" height="1.6" fill="#dfe2e6"/><rect x="18.900000000000002" y="0.0" width="1.5" height="1.6" fill="#dfe2e6"/><rect x="18.900000000000002" y="3.8" width="1.5" height="1.6" fill="#dfe2e6"/></svg>
<svg style="left:35px;top:966px;" width="12" height="12" viewBox="0 0 12 12"><path d="M1 1 L11 11 M11 1 L1 11" stroke="#e4e6e9" stroke-width="2"/></svg>
<svg style="left:32px;top:987px;" width="20" height="22" viewBox="0 0 20 22"><path d="M2 19.5 L11 10" stroke="#e4e6e9" stroke-width="3.2" stroke-linecap="round"/><path d="M16.5 2 A5 5 0 1 0 18.5 8 L14.5 8.5 L12.5 5.5 Z" fill="#e4e6e9"/></svg>
<span class="t" style="left:60px;top:951.66px;font-size:14px;line-height:14px;color:#1e1e1e;font-family:'DejaVu Sans Mono',monospace;">Выполняется регенерация модели.</span>
<span class="t" style="left:60px;top:969.36px;font-size:14px;line-height:14px;color:#1e1e1e;font-family:'DejaVu Sans Mono',monospace;">Выполняется регенерация модели.</span>
<span class="t" style="left:60px;top:987.06px;font-size:14px;line-height:14px;color:#1e1e1e;font-family:'DejaVu Sans Mono',monospace;">Выполняется регенерация модели.</span>
<span class="t" style="left:60px;top:1004.76px;font-size:14px;line-height:14px;color:#1e1e1e;font-family:'DejaVu Sans Mono',monospace;">ГЕОРАНДОМ</span>
<span class="t" style="left:135.78px;top:1002.46px;font-size:14px;line-height:14px;color:#1e1e1e;font-family:'DejaVu Sans Mono',monospace;">_</span>
<span class="t" style="left:144.2px;top:1004.76px;font-size:14px;line-height:14px;color:#1e1e1e;font-family:'DejaVu Sans Mono',monospace;">ОБЪЕМЫ</span>
<span class="t" style="left:194.71999999999997px;top:1002.46px;font-size:14px;line-height:14px;color:#1e1e1e;font-family:'DejaVu Sans Mono',monospace;">_</span>
<span class="t" style="left:203.13999999999996px;top:1004.76px;font-size:14px;line-height:14px;color:#1e1e1e;font-family:'DejaVu Sans Mono',monospace;">КАРТОГРАММА</span>
<svg style="left:61px;top:1025px;" width="34" height="17" viewBox="0 0 34 17"><rect x="0.5" y="0.5" width="18" height="15" fill="#f4f4f4" stroke="#8c8c8c"/><rect x="0.5" y="0.5" width="18" height="3.5" fill="#8c8c8c"/><path d="M3 7 L6 9.5 L3 12 M7.5 12.5 H12" stroke="#555" stroke-width="1.1" fill="none"/><path d="M22 6 H31 L26.5 11.5 Z" fill="#555"/></svg>
<span class="t" style="left:99px;top:1027.16px;font-size:14px;line-height:14px;color:#8c8c8c;font-family:'DejaVu Sans Mono',monospace;font-style:italic;letter-spacing:-0.029px;">Введите команду</span>
<div style="left:1478px;top:971px;width:224px;height:21px;background:rgba(215,218,228,.35);"></div>
<div style="left:1498px;top:971px;width:1px;height:21px;background:rgba(190,194,205,.5);"></div>
<div style="left:1483px;top:976px;width:9px;height:9px;border-radius:50%;background:radial-gradient(circle at 35% 35%,#e8e8f0,#aeb0c4);opacity:.8;"></div>
<span class="t" style="left:1508px;top:974.65px;font-size:14px;line-height:14px;color:#b9b9b9;letter-spacing:0.367px;">Окно</span>
<svg style="left:0px;top:1046px;" width="200" height="24" viewBox="0 0 200 24"><path d="M0 0 H96 L90 15 C88 20 86 21 82 21 H26 C20 21 18 19 16 15 L13 7 C11 2 8 0 0 0 Z" fill="#3a4251"/>
<path d="M99 0 H163 L157 15 C155 20 153 21 149 21 H110 C105 21 103 19 101 15 Z" fill="#2b323f"/>
<path d="M170 0 H192 L186 14 C185 17 183 18 180 18 H168 C164 18 163 16 164 13 Z" fill="#2b323f"/></svg>
<span class="t" style="left:27px;top:1050.23px;font-size:14.5px;line-height:14.5px;color:#ffffff;font-family:'Liberation Sans',sans-serif;font-weight:bold;letter-spacing:-0.356px;">Модель</span>
<span class="t" style="left:108px;top:1050.23px;font-size:14.5px;line-height:14.5px;color:#9aa1ad;letter-spacing:-0.514px;">Лист1</span>
<svg style="left:171px;top:1051px;" width="12" height="12" viewBox="0 0 12 12"><path d="M6 1 V11 M1 6 H11" stroke="#a8aeb8" stroke-width="2.2"/></svg>
<div style="left:464px;top:1047px;width:1456px;height:30px;background:#1f2531;"></div>
<div style="left:464px;top:1048px;width:211px;height:28px;background:#3b4453;"></div>
<span class="t" style="left:492px;top:1055.15px;font-size:14px;line-height:14px;color:#e6e8eb;letter-spacing:-0.220px;">28506.314, 22480.043, 0.000</span>
<div style="left:678px;top:1048px;width:66px;height:28px;background:#3b4453;"></div>
<span class="t" style="left:682px;top:1055.15px;font-size:14px;line-height:14px;color:#e6e8eb;letter-spacing:-0.240px;">МОДЕЛЬ</span>
<div style="left:747px;top:1048px;width:75px;height:28px;background:#3b4453;"></div>
<div style="left:825px;top:1048px;width:253px;height:28px;background:#3b4453;"></div>
<div style="left:1081px;top:1048px;width:320px;height:28px;background:#3b4453;"></div>
<div style="left:1403px;top:1048px;width:68px;height:28px;background:#3b4453;"></div>
<div style="left:1473px;top:1048px;width:47px;height:28px;background:#3b4453;"></div>
<div style="left:1522px;top:1048px;width:27px;height:28px;background:#3b4453;"></div>
<div style="left:1551px;top:1048px;width:134px;height:28px;background:#3b4453;"></div>
<div style="left:1687px;top:1048px;width:26px;height:28px;background:#3b4453;"></div>
<div style="left:1715px;top:1048px;width:48px;height:28px;background:#3b4453;"></div>
<div style="left:1765px;top:1048px;width:94px;height:28px;background:#3b4453;"></div>
<div style="left:1861px;top:1048px;width:59px;height:28px;background:#3b4453;"></div>
<div style="left:1797px;top:1048px;width:27px;height:28px;background:#4f6f9f;"></div>
<div style="left:855px;top:1048px;width:26px;height:28px;background:#5b8fd2;"></div>
<div style="left:912px;top:1048px;width:26px;height:28px;background:#5b8fd2;"></div>
<div style="left:1007px;top:1048px;width:26px;height:28px;background:#5b8fd2;"></div>
<div style="left:1035px;top:1048px;width:26px;height:28px;background:#5b8fd2;"></div>
<div style="left:1081.5px;top:1048px;width:27.0px;height:28px;background:#5b8fd2;"></div>
<div style="left:1111px;top:1048px;width:27px;height:28px;background:#5b8fd2;"></div>
<div style="left:1170px;top:1048px;width:26px;height:28px;background:#5b8fd2;"></div>
<div style="left:1220px;top:1048px;width:25px;height:28px;background:#5b8fd2;"></div>
<div style="left:1294px;top:1048px;width:27px;height:28px;background:#5b8fd2;"></div>
<div style="left:1344px;top:1048px;width:27px;height:28px;background:#5b8fd2;"></div>
<div style="left:1373px;top:1048px;width:25px;height:28px;background:#5b8fd2;"></div>
<div style="left:1717px;top:1048px;width:28px;height:28px;background:#5b8fd2;"></div>
<svg style="left:752px;top:1052px;" width="20" height="20" viewBox="0 0 20 20"><path d="M5 1 V19 M10 1 V19 M15 1 V19 M1 5 H19 M1 10 H19 M1 15 H19" stroke="#e2e4e8" stroke-width="1.2"/></svg>
<svg style="left:780px;top:1052px;" width="20" height="20" viewBox="0 0 20 20"><rect x="2.0" y="2.0" width="2.6" height="2.6" fill="#e2e4e8"/><rect x="2.0" y="8.5" width="2.6" height="2.6" fill="#e2e4e8"/><rect x="2.0" y="15.0" width="2.6" height="2.6" fill="#e2e4e8"/><rect x="8.5" y="2.0" width="2.6" height="2.6" fill="#e2e4e8"/><rect x="8.5" y="8.5" width="2.6" height="2.6" fill="#e2e4e8"/><rect x="8.5" y="15.0" width="2.6" height="2.6" fill="#e2e4e8"/><rect x="15.0" y="2.0" width="2.6" height="2.6" fill="#e2e4e8"/><rect x="15.0" y="8.5" width="2.6" height="2.6" fill="#e2e4e8"/><rect x="15.0" y="15.0" width="2.6" height="2.6" fill="#e2e4e8"/></svg>
<svg style="left:807px;top:1059px;" width="9" height="5" viewBox="0 0 9 5"><path d="M0 0 H9 L4.5 5 Z" fill="#e2e4e8"/></svg>
<svg style="left:828px;top:1052px;" width="20" height="20" viewBox="0 0 20 20"><path d="M7 9 V2 H18 V9 H12" stroke="#e2e4e8" stroke-width="1.3" fill="none"/><rect x="2" y="11" width="8" height="8" fill="#e2e4e8"/></svg>
<svg style="left:858px;top:1052px;" width="20" height="20" viewBox="0 0 20 20"><path d="M5 1 V9 M1 5 H9" stroke="#fff" stroke-width="1.6"/><rect x="8" y="11" width="11" height="5" fill="#fff"/></svg>
<svg style="left:887px;top:1052px;" width="20" height="20" viewBox="0 0 20 20"><path d="M3 1 V18 H19 M3 11 H8" stroke="#e2e4e8" stroke-width="1.3" fill="none"/></svg>
<svg style="left:915px;top:1052px;" width="20" height="20" viewBox="0 0 20 20"><circle cx="9" cy="11" r="7" fill="none" stroke="#fff" stroke-width="1.4"/><path d="M9 11 L17 2 M9 11 H20" stroke="#fff" stroke-width="1.3"/></svg>
<svg style="left:945px;top:1059px;" width="9" height="5" viewBox="0 0 9 5"><path d="M0 0 H9 L4.5 5 Z" fill="#e2e4e8"/></svg>
<svg style="left:968px;top:1052px;" width="20" height="20" viewBox="0 0 20 20"><path d="M10 1 V19" stroke="#4fc470" stroke-width="1.3"/><path d="M3 4 L17 16" stroke="#e05a5a" stroke-width="1.3"/><path d="M10 11 L16 8" stroke="#e2e4e8" stroke-width="1"/></svg>
<svg style="left:991px;top:1059px;" width="9" height="5" viewBox="0 0 9 5"><path d="M0 0 H9 L4.5 5 Z" fill="#e2e4e8"/></svg>
<svg style="left:1010px;top:1052px;" width="20" height="20" viewBox="0 0 20 20"><path d="M2 17 H19 M3 16 L16 4" stroke="#fff" stroke-width="1.4"/><rect x="8" y="9" width="3" height="3" fill="#fff"/></svg>
<svg style="left:1038px;top:1052px;" width="20" height="20" viewBox="0 0 20 20"><rect x="4" y="4" width="14" height="14" fill="none" stroke="#fff" stroke-width="1.4"/><rect x="1.5" y="1.5" width="5" height="5" fill="#5b8fd2" stroke="#fff" stroke-width="1.2"/></svg>
<svg style="left:1068px;top:1059px;" width="9" height="5" viewBox="0 0 9 5"><path d="M0 0 H9 L4.5 5 Z" fill="#e2e4e8"/></svg>
<svg style="left:1085px;top:1052px;" width="20" height="20" viewBox="0 0 20 20"><path d="M1 3.5 H19 M1 10 H19 M1 16.5 H19" stroke="#fff" stroke-width="3.4"/><path d="M11 10 H19 M14 16.5 H19" stroke="#5b8fd2" stroke-width="3.6"/><path d="M11 10 H19" stroke="#fff" stroke-width="1.6"/><path d="M14 16.5 H19" stroke="#fff" stroke-width="1"/></svg>
<svg style="left:1115px;top:1052px;" width="20" height="20" viewBox="0 0 20 20"><rect x="1.0" y="1.0" width="4.5" height="4.5" fill="#fff"/><rect x="1.0" y="5.5" width="4.5" height="4.5" fill="#8fb4e4"/><rect x="1.0" y="10.0" width="4.5" height="4.5" fill="#fff"/><rect x="1.0" y="14.5" width="4.5" height="4.5" fill="#8fb4e4"/><rect x="5.5" y="1.0" width="4.5" height="4.5" fill="#8fb4e4"/><rect x="5.5" y="5.5" width="4.5" height="4.5" fill="#fff"/><rect x="5.5" y="10.0" width="4.5" height="4.5" fill="#8fb4e4"/><rect x="5.5" y="14.5" width="4.5" height="4.5" fill="#fff"/><rect x="10.0" y="1.0" width="4.5" height="4.5" fill="#fff"/><rect x="10.0" y="5.5" width="4.5" height="4.5" fill="#8fb4e4"/><rect x="10.0" y="10.0" width="4.5" height="4.5" fill="#fff"/><rect x="10.0" y="14.5" width="4.5" height="4.5" fill="#8fb4e4"/><rect x="14.5" y="1.0" width="4.5" height="4.5" fill="#8fb4e4"/><rect x="14.5" y="5.5" width="4.5" height="4.5" fill="#fff"/><rect x="14.5" y="10.0" width="4.5" height="4.5" fill="#8fb4e4"/><rect x="14.5" y="14.5" width="4.5" height="4.5" fill="#fff"/></svg>
<svg style="left:1144px;top:1052px;" width="20" height="20" viewBox="0 0 20 20"><rect x="7" y="7" width="12" height="12" fill="#5bc27a"/><path d="M2 12 V2 H12" stroke="#e2e4e8" stroke-width="1.3" fill="none"/><path d="M5 15 V5 H15" stroke="#8a8d93" stroke-width="1.3" fill="none"/></svg>
<svg style="left:1173px;top:1052px;" width="20" height="20" viewBox="0 0 20 20"><path d="M2 7 L7 2 H18 V13 L13 18 H2 Z M2 7 H13 V18 M13 7 L18 2" stroke="#fff" stroke-width="1.3" fill="none"/><rect x="0.5" y="16" width="4" height="4" fill="#5b8fd2" stroke="#fff" stroke-width="1"/></svg>
<svg style="left:1202px;top:1059px;" width="9" height="5" viewBox="0 0 9 5"><path d="M0 0 H9 L4.5 5 Z" fill="#e2e4e8"/></svg>
<svg style="left:1223px;top:1052px;" width="20" height="20" viewBox="0 0 20 20"><path d="M4 2 V16 H18" stroke="#fff" stroke-width="1.4" fill="none"/><path d="M4 0 l-2.4 4 h4.8z M20 16 l-4 -2.4 v4.8z" fill="#fff"/><path d="M9 12 L14 5 L15.5 9 L19 4" stroke="#fff" stroke-width="1.2" fill="none"/></svg>
<svg style="left:1251px;top:1052px;" width="20" height="20" viewBox="0 0 20 20"><rect x="3" y="4" width="14" height="12" fill="none" stroke="#e2e4e8" stroke-width="1.3"/><path d="M0 4 H4 V0 M16 0 V4 H20 M0 16 H4 V20 M16 20 V16 H20" stroke="#6aa8e8" stroke-width="1.4" fill="none"/></svg>
<svg style="left:1280px;top:1059px;" width="9" height="5" viewBox="0 0 9 5"><path d="M0 0 H9 L4.5 5 Z" fill="#e2e4e8"/></svg>
<svg style="left:1298px;top:1052px;" width="20" height="20" viewBox="0 0 20 20"><path d="M10 1 L18 15 H2 Z" stroke="#fff" stroke-width="1.3" fill="none"/><path d="M10 10 V1 M10 10 L2 15 M10 10 L18 15" stroke="#fff" stroke-width="1"/><circle cx="10" cy="10" r="5.5" fill="none" stroke="#fff" stroke-width="1"/></svg>
<svg style="left:1327px;top:1059px;" width="9" height="5" viewBox="0 0 9 5"><path d="M0 0 H9 L4.5 5 Z" fill="#e2e4e8"/></svg>
<svg style="left:1347px;top:1052px;" width="20" height="20" viewBox="0 0 20 20"><path d="M10 1 L13 12 L19 18 L10 14.5 L1 18 L7 12 Z" fill="#fff"/><circle cx="16" cy="4" r="2.2" fill="none" stroke="#fff" stroke-width="1"/></svg>
<svg style="left:1376px;top:1052px;" width="20" height="20" viewBox="0 0 20 20"><path d="M10 1 L13 12 L19 18 L10 14.5 L1 18 L7 12 Z" fill="#fff"/><path d="M14 7 L18 1 L17 5 L20 4 L15 9 Z" fill="#fff"/></svg>
<svg style="left:1404px;top:1052px;" width="20" height="20" viewBox="0 0 20 20"><path d="M10 1 L13 12 L19 18 L10 14.5 L1 18 L7 12 Z" fill="#d8dade"/></svg>
<span class="t" style="left:1434px;top:1055.65px;font-size:14px;line-height:14px;color:#e6e8eb;letter-spacing:-0.821px;">1:1</span>
<svg style="left:1457px;top:1059px;" width="9" height="5" viewBox="0 0 9 5"><path d="M0 0 H9 L4.5 5 Z" fill="#e2e4e8"/></svg>
<svg style="left:1478px;top:1052px;" width="20" height="20" viewBox="0 0 20 20"><circle cx="10" cy="10" r="5" fill="none" stroke="#e2e4e8" stroke-width="3.6"/><g stroke="#e2e4e8" stroke-width="3.2"><path d="M10 0.5 V4" transform="rotate(0 10 10)"/><path d="M10 0.5 V4" transform="rotate(45 10 10)"/><path d="M10 0.5 V4" transform="rotate(90 10 10)"/><path d="M10 0.5 V4" transform="rotate(135 10 10)"/><path d="M10 0.5 V4" transform="rotate(180 10 10)"/><path d="M10 0.5 V4" transform="rotate(225 10 10)"/><path d="M10 0.5 V4" transform="rotate(270 10 10)"/><path d="M10 0.5 V4" transform="rotate(315 10 10)"/></g></svg>
<svg style="left:1506px;top:1059px;" width="9" height="5" viewBox="0 0 9 5"><path d="M0 0 H9 L4.5 5 Z" fill="#e2e4e8"/></svg>
<svg style="left:1527px;top:1053px;" width="18" height="18" viewBox="0 0 18 18"><path d="M9 0 V18 M0 9 H18" stroke="#e2e4e8" stroke-width="2.2"/></svg>
<svg style="left:1561px;top:1052px;" width="11" height="20" viewBox="0 0 11 20"><rect x="0" y="0.5" width="10" height="19" fill="#e2e4e8"/><path d="M4 3 H10 M6 6 H10 M4 9 H10 M6 12 H10 M4 15 H10" stroke="#3b4453" stroke-width="1.2"/></svg>
<span class="t" style="left:1586px;top:1055.65px;font-size:14px;line-height:14px;color:#e6e8eb;letter-spacing:0.204px;">Десятичные</span>
<svg style="left:1671px;top:1059px;" width="9" height="5" viewBox="0 0 9 5"><path d="M0 0 H9 L4.5 5 Z" fill="#e2e4e8"/></svg>
<svg style="left:1693px;top:1052px;" width="15" height="20" viewBox="0 0 15 20"><rect x="0.7" y="0.7" width="13.6" height="18.6" fill="none" stroke="#e2e4e8" stroke-width="1.3"/><rect x="0.7" y="0.7" width="13.6" height="3.5" fill="#e2e4e8"/><path d="M3 7.5 H4.5 M6 7.5 H12 M3 11 H4.5 M6 11 H12 M3 14.5 H4.5 M6 14.5 H12" stroke="#e2e4e8" stroke-width="1.2"/></svg>
<svg style="left:1720px;top:1052px;" width="20" height="20" viewBox="0 0 20 20"><rect x="1" y="2" width="15" height="13" fill="none" stroke="#fff" stroke-width="1.3"/><rect x="1" y="2" width="15" height="3" fill="#fff"/><rect x="11" y="13" width="8" height="6.5" fill="#fff"/><path d="M13 13 V11.5 C13 9.5 17 9.5 17 11.5 V13" stroke="#fff" stroke-width="1.2" fill="none"/></svg>
<svg style="left:1750px;top:1059px;" width="9" height="5" viewBox="0 0 9 5"><path d="M0 0 H9 L4.5 5 Z" fill="#e2e4e8"/></svg>
<svg style="left:1770px;top:1052px;" width="20" height="20" viewBox="0 0 20 20"><rect x="1" y="1" width="6.5" height="6.5" fill="none" stroke="#e2e4e8" stroke-width="1.2"/><circle cx="14.5" cy="8.5" r="3.6" fill="none" stroke="#e2e4e8" stroke-width="1.2"/><path d="M7.5 12 L11.5 19 H3.5 Z" fill="none" stroke="#e2e4e8" stroke-width="1.2"/></svg>
<svg style="left:1801px;top:1052px;" width="20" height="20" viewBox="0 0 20 20"><circle cx="10" cy="10" r="8" fill="none" stroke="#8fb4e4" stroke-width="1.4"/><path d="M7 14 L13.5 6" stroke="#8fb4e4" stroke-width="2.4" stroke-linecap="round"/></svg>
<svg style="left:1831px;top:1050px;" width="26" height="24" viewBox="0 0 26 24"><path d="M3 6 L12 1 L21 6 V16 L12 21 L3 16 Z" fill="#4f7fc4"/><path d="M7 2 V8 M3.5 5 H10.5" stroke="#fff" stroke-width="1.4"/><path d="M0 13 H9 L10 14.5 H14 V22 H0 Z" fill="#f0b429"/><path d="M11 17 L15.5 22 L24 11" stroke="#3fb45a" stroke-width="2.8" fill="none"/></svg>
<svg style="left:1867px;top:1053px;" width="20" height="18" viewBox="0 0 20 18"><rect x="0.7" y="0.7" width="18.6" height="15.6" fill="none" stroke="#e2e4e8" stroke-width="1.3"/><path d="M16 4 L11 8 M16 4 H12.5 M16 4 V7.5 M4 13 L9 9 M4 13 H7.5 M4 13 V9.5" stroke="#e2e4e8" stroke-width="1.2" fill="none"/></svg>
<svg style="left:1896px;top:1054px;" width="19" height="16" viewBox="0 0 19 16"><path d="M0 1.5 H19 M0 8 H19 M0 14.5 H19" stroke="#e2e4e8" stroke-width="2.6"/></svg>
</body></html>
